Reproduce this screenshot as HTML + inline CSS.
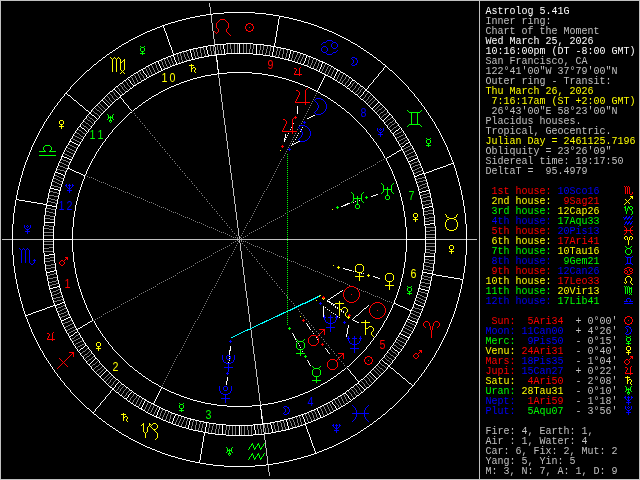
<!DOCTYPE html>
<html><head><meta charset="utf-8"><title>Astrolog 5.41G</title>
<style>
html,body{margin:0;padding:0;background:#000;overflow:hidden}
#c{will-change:transform;position:relative;width:640px;height:480px;background:#000;overflow:hidden}
svg{position:absolute;left:0;top:0}
svg path{fill:none;stroke-width:1;shape-rendering:crispEdges}
svg text{font-family:"Liberation Sans",sans-serif;font-size:12.6px;text-anchor:middle}
pre{position:absolute;left:485.5px;top:7px;margin:0;font-family:"Liberation Mono",monospace;font-size:10px;line-height:10px;color:#c0c0c0;white-space:pre}
.w{color:#fff}.y{color:#ff0}.r{color:#f00}.g{color:#0f0}.b{color:#00f}
</style></head><body><div id="c">
<svg width="640" height="480" viewBox="0 0 640 480"><g transform="translate(0,0.5)">
<path stroke="#ffffff" d="M224 12h31M213 13h11M255 13h11M206 14h7M266 14h7M200 15h6M273 15h6M195 16h5M279 16h5M190 17h5M279 17h1M284 17h5M186 18h4M279 18h1M289 18h4M182 19h4M278 19h1M293 19h4M178 20h4M278 20h1M297 20h4M175 21h3M278 21h1M301 21h3M171 22h4M278 22h1M304 22h4M168 23h3M278 23h1M308 23h3M165 24h3M278 24h1M311 24h3M162 25h3M277 25h1M314 25h3M160 26h2M163 26h1M277 26h1M317 26h2M157 27h3M163 27h1M277 27h1M319 27h3M155 28h2M164 28h1M277 28h1M322 28h2M152 29h3M164 29h1M277 29h1M324 29h3M150 30h2M164 30h1M277 30h1M327 30h2M147 31h3M165 31h1M276 31h1M329 31h3M145 32h2M165 32h1M276 32h1M332 32h2M143 33h2M166 33h1M276 33h1M334 33h2M141 34h2M166 34h1M276 34h1M336 34h2M139 35h2M166 35h1M276 35h1M338 35h2M137 36h2M167 36h1M276 36h1M340 36h2M135 37h2M167 37h1M275 37h1M342 37h2M133 38h2M167 38h1M275 38h1M344 38h2M131 39h2M168 39h1M275 39h1M346 39h2M129 40h2M168 40h1M275 40h1M348 40h2M128 41h1M168 41h1M275 41h1M350 41h1M126 42h2M169 42h1M275 42h1M351 42h2M124 43h2M169 43h1M226 43h27M274 43h1M353 43h2M122 44h2M169 44h1M215 44h11M239 44h1M253 44h11M274 44h1M355 44h2M121 45h1M170 45h1M208 45h7M223 45h1M239 45h1M256 45h1M264 45h7M274 45h1M357 45h1M119 46h2M170 46h1M203 46h5M223 46h1M239 46h1M256 46h1M271 46h5M358 46h2M118 47h1M171 47h1M198 47h5M206 47h1M223 47h1M239 47h1M256 47h1M273 47h1M276 47h5M360 47h1M116 48h2M171 48h1M193 48h5M206 48h1M223 48h1M239 48h1M256 48h1M273 48h1M281 48h5M361 48h2M115 49h1M171 49h1M189 49h4M206 49h1M224 49h1M239 49h1M256 49h1M273 49h1M286 49h4M363 49h1M113 50h2M172 50h1M186 50h3M190 50h1M207 50h1M224 50h1M239 50h1M256 50h1M273 50h1M290 50h3M364 50h2M112 51h1M172 51h1M182 51h4M190 51h1M207 51h1M224 51h1M239 51h1M256 51h1M273 51h1M290 51h1M293 51h4M366 51h1M110 52h2M172 52h1M179 52h3M190 52h1M207 52h1M224 52h1M239 52h1M256 52h1M272 52h1M290 52h1M297 52h3M367 52h2M109 53h1M173 53h1M176 53h3M191 53h1M207 53h1M224 53h1M226 53h27M256 53h1M272 53h1M290 53h1M300 53h3M369 53h1M107 54h2M173 54h3M191 54h1M208 54h1M216 54h10M253 54h10M272 54h1M289 54h1M303 54h3M370 54h2M106 55h1M171 55h3M191 55h1M208 55h9M263 55h7M272 55h1M289 55h1M306 55h2M372 55h1M105 56h1M168 56h3M173 56h1M191 56h1M204 56h5M216 56h1M270 56h5M289 56h1M306 56h1M308 56h3M373 56h1M103 57h2M166 57h2M174 57h1M192 57h1M199 57h5M216 57h1M275 57h5M289 57h1M306 57h1M311 57h2M374 57h2M102 58h1M163 58h3M174 58h1M192 58h1M195 58h4M216 58h1M280 58h4M288 58h1M305 58h1M313 58h3M376 58h1M101 59h1M161 59h2M174 59h1M191 59h4M216 59h1M284 59h5M305 59h1M316 59h2M377 59h1M99 60h2M159 60h2M175 60h1M187 60h4M217 60h1M288 60h4M305 60h1M318 60h2M378 60h2M98 61h1M156 61h3M175 61h1M184 61h3M217 61h1M292 61h3M304 61h1M320 61h3M380 61h1M97 62h1M154 62h2M158 62h1M176 62h1M181 62h3M217 62h1M295 62h3M304 62h1M322 62h3M381 62h1M96 63h1M152 63h2M158 63h1M176 63h1M178 63h3M217 63h1M298 63h3M303 63h1M322 63h1M325 63h2M382 63h1M94 64h2M150 64h2M159 64h1M175 64h3M217 64h1M301 64h3M321 64h1M327 64h2M383 64h2M93 65h1M148 65h2M159 65h1M172 65h3M217 65h1M304 65h3M321 65h1M329 65h2M385 65h1M92 66h1M146 66h2M160 66h1M170 66h2M217 66h1M307 66h2M321 66h1M331 66h2M385 66h2M91 67h1M145 67h1M160 67h1M168 67h2M217 67h1M309 67h2M320 67h1M333 67h1M384 67h1M387 67h1M90 68h1M143 68h2M161 68h1M165 68h3M217 68h1M311 68h3M320 68h1M334 68h2M383 68h1M388 68h1M89 69h1M141 69h2M161 69h1M163 69h2M218 69h1M314 69h2M319 69h1M336 69h2M383 69h1M389 69h1M87 70h2M139 70h2M142 70h1M161 70h2M218 70h1M316 70h2M319 70h1M337 70h3M382 70h1M390 70h2M86 71h1M138 71h1M143 71h1M159 71h2M218 71h1M318 71h2M337 71h1M340 71h1M381 71h1M392 71h1M85 72h1M136 72h2M143 72h1M157 72h2M218 72h1M227 72h25M320 72h2M336 72h1M341 72h2M380 72h1M393 72h1M84 73h1M134 73h2M144 73h1M155 73h2M217 73h10M252 73h10M322 73h2M336 73h1M343 73h2M379 73h1M394 73h1M83 74h1M133 74h1M145 74h1M153 74h2M211 74h6M262 74h6M324 74h2M335 74h1M345 74h1M378 74h1M395 74h1M82 75h1M131 75h2M146 75h1M151 75h2M205 75h6M268 75h6M325 75h3M335 75h1M346 75h2M378 75h1M396 75h1M81 76h1M130 76h1M146 76h1M149 76h2M201 76h4M274 76h4M324 76h1M328 76h2M334 76h1M348 76h1M377 76h1M397 76h1M80 77h1M128 77h2M147 77h2M197 77h4M278 77h4M324 77h1M330 77h2M334 77h1M349 77h2M376 77h1M398 77h1M79 78h1M127 78h1M146 78h1M193 78h4M282 78h4M323 78h1M332 78h2M351 78h1M375 78h1M399 78h1M78 79h1M126 79h1M128 79h1M144 79h2M190 79h3M286 79h3M323 79h1M333 79h2M352 79h1M374 79h1M400 79h1M77 80h1M124 80h2M129 80h1M142 80h2M187 80h3M289 80h3M322 80h1M335 80h2M352 80h3M373 80h1M401 80h1M76 81h1M123 81h1M130 81h1M141 81h1M184 81h3M292 81h3M322 81h1M337 81h1M351 81h1M355 81h1M373 81h1M402 81h1M75 82h1M122 82h1M130 82h1M139 82h2M181 82h3M295 82h3M321 82h1M338 82h2M350 82h1M356 82h1M372 82h1M403 82h1M74 83h1M120 83h2M131 83h1M137 83h2M179 83h2M298 83h2M321 83h1M340 83h2M350 83h1M357 83h2M371 83h1M404 83h1M73 84h1M119 84h1M132 84h1M136 84h1M176 84h3M300 84h3M320 84h1M342 84h1M349 84h1M359 84h1M370 84h1M405 84h1M72 85h1M118 85h1M133 85h3M174 85h2M303 85h2M320 85h1M343 85h2M348 85h1M360 85h1M369 85h1M406 85h1M71 86h1M116 86h2M133 86h1M171 86h3M305 86h3M319 86h1M345 86h1M347 86h1M361 86h2M368 86h1M407 86h1M70 87h1M115 87h1M132 87h1M169 87h2M308 87h2M319 87h1M346 87h1M363 87h1M368 87h1M408 87h1M70 88h1M114 88h1M130 88h2M167 88h2M310 88h2M318 88h1M347 88h2M364 88h1M367 88h1M408 88h1M69 89h1M113 89h2M129 89h1M165 89h2M312 89h2M318 89h1M349 89h1M365 89h2M409 89h1M68 90h1M112 90h1M115 90h1M128 90h1M163 90h2M314 90h2M317 90h1M350 90h1M365 90h2M410 90h1M67 91h1M110 91h2M116 91h1M126 91h2M161 91h2M316 91h2M351 91h2M364 91h1M367 91h2M411 91h1M66 92h1M109 92h1M117 92h1M125 92h1M159 92h2M318 92h2M353 92h1M363 92h1M369 92h1M412 92h1M65 93h2M108 93h1M118 93h1M124 93h1M158 93h1M320 93h1M354 93h1M363 93h1M370 93h1M413 93h1M64 94h1M67 94h1M107 94h1M119 94h1M122 94h2M156 94h2M321 94h2M355 94h2M362 94h1M371 94h1M414 94h1M64 95h1M68 95h2M106 95h1M120 95h2M154 95h2M323 95h2M357 95h1M361 95h1M372 95h1M414 95h1M63 96h1M70 96h1M105 96h1M120 96h1M152 96h2M325 96h2M358 96h1M360 96h1M373 96h1M415 96h1M62 97h1M71 97h1M104 97h1M119 97h2M151 97h1M327 97h1M359 97h1M374 97h1M416 97h1M61 98h1M72 98h1M103 98h1M118 98h1M121 98h1M149 98h2M328 98h2M360 98h1M375 98h1M417 98h1M60 99h1M73 99h1M102 99h1M116 99h2M122 99h1M148 99h1M330 99h1M361 99h2M376 99h1M418 99h1M60 100h1M74 100h2M101 100h2M115 100h1M123 100h1M146 100h2M331 100h2M363 100h1M377 100h1M418 100h1M59 101h1M76 101h1M100 101h1M103 101h1M114 101h1M123 101h1M145 101h1M333 101h1M364 101h1M378 101h1M419 101h1M58 102h1M77 102h1M99 102h1M104 102h1M113 102h1M124 102h1M143 102h2M334 102h2M365 102h1M378 102h2M420 102h1M57 103h1M78 103h1M98 103h1M105 103h1M112 103h1M125 103h1M142 103h1M336 103h1M366 103h1M377 103h1M380 103h1M421 103h1M57 104h1M79 104h1M97 104h1M106 104h1M111 104h1M126 104h1M141 104h1M337 104h1M367 104h1M376 104h1M381 104h1M421 104h1M56 105h1M80 105h2M96 105h1M107 105h1M110 105h1M127 105h1M139 105h2M338 105h2M368 105h1M375 105h1M382 105h1M422 105h1M55 106h1M82 106h1M95 106h1M108 106h2M128 106h1M138 106h1M297 106h1M340 106h1M369 106h1M374 106h1M383 106h1M423 106h1M54 107h1M83 107h1M94 107h1M108 107h1M128 107h1M137 107h1M297 107h1M341 107h1M370 107h1M373 107h1M384 107h1M424 107h1M54 108h1M84 108h1M93 108h1M107 108h1M129 108h1M135 108h2M297 108h1M342 108h2M371 108h2M385 108h1M424 108h1M53 109h1M85 109h1M92 109h1M106 109h1M130 109h1M134 109h1M297 109h1M344 109h1M372 109h1M386 109h1M425 109h1M52 110h1M86 110h2M91 110h1M105 110h1M131 110h1M133 110h1M297 110h1M345 110h1M373 110h1M387 110h1M426 110h1M52 111h1M88 111h1M91 111h1M104 111h1M297 111h1M346 111h1M374 111h1M387 111h1M426 111h1M51 112h1M89 112h2M103 112h1M130 112h2M297 112h1M347 112h2M375 112h1M388 112h1M427 112h1M50 113h1M89 113h2M102 113h1M129 113h1M297 113h1M349 113h1M376 113h1M389 113h1M428 113h1M50 114h1M88 114h1M91 114h1M101 114h1M128 114h1M350 114h1M377 114h1M389 114h2M428 114h1M49 115h1M87 115h1M92 115h2M100 115h1M127 115h1M313 115h2M351 115h1M378 115h1M388 115h1M391 115h1M429 115h1M48 116h1M86 116h1M94 116h1M99 116h1M126 116h1M311 116h2M352 116h1M379 116h1M387 116h1M392 116h1M430 116h1M48 117h1M86 117h1M95 117h1M99 117h1M125 117h1M309 117h2M353 117h1M379 117h1M386 117h1M392 117h1M430 117h1M47 118h1M85 118h1M96 118h1M98 118h1M124 118h1M307 118h2M354 118h1M380 118h1M385 118h1M393 118h1M431 118h1M46 119h1M84 119h1M97 119h1M123 119h1M355 119h1M381 119h1M384 119h1M394 119h1M432 119h1M46 120h1M83 120h1M96 120h1M122 120h1M356 120h1M382 120h2M395 120h1M432 120h1M45 121h1M83 121h1M95 121h1M121 121h1M357 121h1M383 121h1M395 121h1M433 121h1M44 122h1M82 122h1M94 122h1M120 122h1M358 122h1M384 122h1M396 122h1M434 122h1M44 123h1M81 123h1M94 123h1M119 123h1M293 123h1M359 123h1M384 123h1M397 123h1M434 123h1M43 124h1M80 124h1M93 124h1M118 124h1M360 124h1M385 124h1M398 124h1M435 124h1M43 125h1M80 125h1M92 125h1M117 125h1M361 125h1M386 125h1M398 125h1M435 125h1M42 126h1M79 126h2M91 126h1M116 126h1M362 126h1M387 126h1M399 126h1M436 126h1M42 127h1M78 127h1M81 127h1M91 127h1M115 127h1M291 127h1M302 127h1M363 127h1M387 127h1M400 127h1M436 127h1M41 128h1M77 128h1M82 128h2M90 128h1M114 128h1M364 128h1M388 128h1M399 128h1M401 128h1M437 128h1M40 129h1M77 129h1M84 129h1M89 129h1M113 129h1M290 129h1M301 129h1M365 129h1M389 129h1M398 129h1M401 129h1M438 129h1M40 130h1M76 130h1M85 130h1M88 130h1M112 130h1M366 130h1M390 130h1M396 130h2M402 130h1M438 130h1M39 131h1M75 131h1M86 131h1M88 131h1M112 131h1M300 131h1M366 131h1M390 131h1M395 131h1M403 131h1M439 131h1M39 132h1M75 132h1M87 132h1M111 132h1M367 132h1M391 132h1M394 132h1M403 132h1M439 132h1M38 133h1M74 133h1M86 133h1M110 133h1M288 133h1M298 133h1M368 133h1M392 133h2M404 133h1M440 133h1M38 134h1M73 134h1M85 134h1M109 134h1M285 134h1M369 134h1M393 134h1M405 134h1M440 134h1M37 135h1M73 135h1M85 135h1M108 135h1M285 135h1M287 135h1M297 135h1M370 135h1M393 135h1M405 135h1M441 135h1M37 136h1M72 136h1M84 136h1M108 136h1M285 136h1M370 136h1M394 136h1M406 136h1M441 136h1M36 137h1M72 137h1M83 137h1M107 137h1M285 137h2M296 137h1M371 137h1M395 137h1M406 137h1M442 137h1M36 138h1M71 138h1M83 138h1M106 138h1M284 138h1M372 138h1M395 138h1M407 138h1M442 138h1M35 139h1M70 139h1M82 139h1M105 139h1M284 139h2M295 139h1M373 139h1M396 139h1M408 139h1M443 139h1M35 140h1M70 140h1M82 140h1M105 140h1M284 140h1M373 140h1M396 140h1M408 140h1M443 140h1M34 141h1M69 141h3M81 141h1M104 141h1M284 141h1M293 141h1M298 141h2M374 141h1M397 141h1M409 141h1M444 141h1M34 142h1M69 142h1M72 142h2M80 142h1M103 142h1M296 142h2M375 142h1M398 142h1M408 142h2M444 142h1M33 143h1M68 143h1M74 143h2M80 143h1M102 143h1M292 143h1M294 143h2M376 143h1M398 143h1M406 143h2M410 143h1M445 143h1M33 144h1M68 144h1M76 144h2M79 144h1M102 144h1M292 144h2M376 144h1M399 144h1M405 144h1M410 144h1M445 144h1M32 145h1M67 145h1M78 145h2M101 145h1M291 145h1M377 145h1M399 145h1M404 145h1M411 145h1M446 145h1M32 146h1M66 146h1M78 146h1M100 146h1M378 146h1M400 146h1M402 146h2M412 146h1M446 146h1M31 147h1M66 147h1M77 147h1M100 147h1M378 147h1M401 147h1M412 147h1M447 147h1M31 148h1M65 148h1M77 148h1M99 148h1M379 148h1M401 148h1M413 148h1M447 148h1M31 149h1M65 149h1M76 149h1M98 149h1M380 149h1M401 149h2M413 149h1M447 149h1M30 150h1M64 150h1M76 150h1M98 150h1M380 150h1M399 150h2M402 150h1M414 150h1M448 150h1M30 151h1M64 151h1M75 151h1M97 151h1M381 151h1M397 151h2M403 151h1M414 151h1M448 151h1M29 152h1M63 152h1M75 152h1M96 152h1M382 152h1M396 152h1M403 152h1M415 152h1M449 152h1M29 153h1M63 153h1M74 153h1M96 153h1M382 153h1M394 153h2M404 153h1M415 153h1M449 153h1M29 154h1M62 154h1M74 154h1M95 154h1M383 154h1M392 154h2M404 154h1M416 154h1M449 154h1M28 155h1M62 155h1M73 155h1M95 155h1M383 155h1M391 155h1M405 155h1M416 155h1M450 155h1M28 156h1M61 156h3M73 156h1M94 156h1M384 156h1M389 156h2M405 156h1M417 156h1M450 156h1M27 157h1M61 157h1M64 157h3M72 157h1M94 157h1M384 157h1M387 157h2M406 157h1M417 157h1M451 157h1M27 158h1M61 158h1M67 158h2M72 158h1M93 158h1M386 158h1M406 158h1M415 158h3M451 158h1M27 159h1M60 159h1M69 159h3M92 159h1M386 159h1M407 159h1M413 159h2M418 159h1M451 159h1M26 160h1M60 160h1M71 160h1M92 160h1M386 160h1M407 160h1M411 160h2M418 160h1M452 160h1M26 161h1M59 161h1M70 161h1M91 161h1M387 161h1M408 161h3M419 161h1M452 161h1M25 162h1M59 162h1M70 162h1M91 162h1M387 162h1M408 162h1M419 162h1M453 162h1M25 163h1M58 163h1M69 163h1M90 163h1M388 163h1M409 163h1M420 163h1M451 163h3M25 164h1M58 164h1M69 164h1M90 164h1M388 164h1M409 164h1M420 164h1M448 164h3M453 164h1M24 165h1M58 165h1M68 165h1M89 165h1M389 165h1M410 165h1M420 165h1M446 165h2M454 165h1M24 166h1M57 166h1M68 166h1M89 166h1M389 166h1M410 166h1M421 166h1M443 166h3M454 166h1M24 167h1M57 167h1M68 167h1M88 167h1M390 167h1M410 167h1M421 167h1M440 167h3M454 167h1M23 168h1M56 168h1M67 168h3M88 168h1M390 168h1M411 168h1M422 168h1M437 168h3M455 168h1M23 169h1M56 169h1M67 169h1M70 169h2M87 169h1M391 169h1M411 169h1M422 169h1M434 169h3M455 169h1M23 170h1M56 170h1M66 170h1M72 170h2M87 170h1M391 170h1M412 170h1M422 170h1M432 170h2M455 170h1M22 171h1M55 171h1M66 171h1M74 171h2M86 171h1M392 171h1M412 171h1M423 171h1M429 171h3M456 171h1M22 172h1M55 172h3M65 172h1M76 172h3M86 172h1M392 172h1M413 172h1M423 172h1M426 172h3M456 172h1M22 173h1M54 173h1M58 173h3M65 173h1M79 173h2M86 173h1M392 173h1M413 173h1M422 173h4M456 173h1M22 174h1M54 174h1M61 174h2M65 174h1M81 174h2M85 174h1M393 174h1M413 174h1M419 174h3M424 174h1M456 174h1M21 175h1M54 175h1M63 175h2M83 175h2M393 175h1M414 175h1M417 175h2M424 175h1M457 175h1M21 176h1M53 176h1M64 176h1M84 176h1M394 176h1M414 176h3M425 176h1M457 176h1M21 177h1M53 177h1M64 177h1M84 177h1M394 177h1M414 177h1M425 177h1M457 177h1M20 178h1M53 178h1M63 178h1M84 178h1M394 178h1M415 178h1M425 178h1M458 178h1M20 179h1M52 179h1M63 179h1M83 179h1M395 179h1M415 179h1M426 179h1M458 179h1M20 180h1M52 180h1M63 180h1M83 180h1M395 180h1M415 180h1M426 180h1M458 180h1M20 181h1M52 181h1M62 181h1M82 181h1M396 181h1M416 181h1M426 181h1M458 181h1M19 182h1M51 182h1M62 182h1M82 182h1M396 182h1M416 182h1M427 182h1M459 182h1M19 183h1M51 183h1M62 183h1M82 183h1M396 183h1M416 183h1M427 183h1M459 183h1M19 184h1M51 184h1M61 184h1M81 184h1M397 184h1M417 184h1M427 184h1M459 184h1M19 185h1M51 185h1M61 185h1M81 185h1M397 185h1M417 185h1M427 185h1M459 185h1M18 186h1M50 186h1M61 186h1M81 186h1M397 186h1M417 186h1M428 186h1M460 186h1M18 187h1M50 187h1M60 187h1M80 187h1M398 187h1M418 187h1M428 187h1M460 187h1M18 188h1M50 188h4M60 188h1M80 188h1M398 188h1M418 188h1M428 188h1M460 188h1M18 189h1M49 189h1M54 189h4M60 189h1M80 189h1M398 189h1M418 189h1M429 189h1M460 189h1M17 190h1M49 190h1M58 190h3M79 190h1M399 190h1M418 190h1M426 190h4M461 190h1M17 191h1M49 191h1M59 191h1M79 191h1M399 191h1M419 191h1M422 191h4M429 191h1M461 191h1M17 192h1M49 192h1M59 192h1M79 192h1M399 192h1M419 192h3M429 192h1M461 192h1M17 193h1M48 193h1M59 193h1M78 193h1M400 193h1M419 193h1M430 193h1M461 193h1M17 194h1M48 194h1M59 194h1M78 194h1M376 194h2M400 194h1M419 194h1M430 194h1M461 194h1M16 195h1M48 195h1M58 195h1M78 195h1M373 195h3M400 195h1M420 195h1M430 195h1M462 195h1M16 196h1M48 196h1M58 196h1M78 196h1M371 196h2M400 196h1M420 196h1M430 196h1M462 196h1M16 197h1M48 197h1M58 197h1M77 197h1M401 197h1M420 197h1M430 197h1M462 197h1M16 198h1M47 198h1M58 198h1M77 198h1M401 198h1M420 198h1M431 198h1M462 198h1M16 199h3M47 199h1M57 199h1M77 199h1M401 199h1M421 199h1M431 199h1M462 199h1M15 200h1M19 200h6M47 200h1M57 200h1M77 200h1M359 200h1M401 200h1M421 200h1M431 200h1M463 200h1M15 201h1M25 201h6M47 201h1M57 201h1M76 201h1M355 201h1M402 201h1M421 201h1M431 201h1M463 201h1M15 202h1M31 202h6M47 202h1M57 202h1M76 202h1M353 202h1M402 202h1M421 202h1M431 202h1M463 202h1M15 203h1M37 203h6M46 203h1M57 203h1M76 203h1M347 203h3M402 203h1M421 203h1M432 203h1M463 203h1M15 204h1M43 204h4M56 204h1M76 204h1M345 204h3M402 204h1M422 204h1M432 204h1M463 204h1M15 205h1M46 205h6M56 205h1M75 205h1M343 205h3M403 205h1M422 205h1M432 205h1M463 205h1M14 206h1M46 206h1M52 206h5M75 206h1M341 206h2M403 206h1M422 206h1M429 206h4M464 206h1M14 207h1M46 207h1M56 207h1M75 207h1M403 207h1M422 207h1M425 207h4M432 207h1M464 207h1M14 208h1M45 208h1M56 208h1M75 208h1M403 208h1M422 208h3M433 208h1M464 208h1M14 209h1M45 209h1M55 209h1M75 209h1M403 209h1M423 209h1M433 209h1M464 209h1M14 210h1M45 210h1M55 210h1M75 210h1M403 210h1M423 210h1M433 210h1M464 210h1M14 211h1M45 211h1M55 211h1M74 211h1M404 211h1M423 211h1M433 211h1M464 211h1M14 212h1M45 212h1M55 212h1M74 212h1M404 212h1M423 212h1M433 212h1M464 212h1M13 213h1M45 213h1M55 213h1M74 213h1M404 213h1M423 213h1M433 213h1M465 213h1M13 214h1M45 214h1M55 214h1M74 214h1M404 214h1M423 214h1M433 214h1M465 214h1M13 215h1M44 215h1M55 215h1M74 215h1M404 215h1M423 215h1M434 215h1M465 215h1M13 216h1M44 216h1M54 216h1M74 216h1M404 216h1M424 216h1M434 216h1M465 216h1M13 217h1M44 217h1M54 217h1M73 217h1M405 217h1M424 217h1M434 217h1M465 217h1M13 218h1M44 218h1M54 218h1M73 218h1M405 218h1M424 218h1M434 218h1M465 218h1M13 219h1M44 219h1M54 219h1M73 219h1M405 219h1M424 219h1M434 219h1M465 219h1M13 220h1M44 220h1M54 220h1M73 220h1M405 220h1M424 220h1M434 220h1M465 220h1M13 221h1M44 221h1M54 221h1M73 221h1M405 221h1M424 221h1M434 221h1M465 221h1M13 222h1M44 222h11M73 222h1M405 222h1M424 222h1M434 222h1M465 222h1M13 223h1M44 223h1M54 223h1M73 223h1M405 223h1M424 223h1M430 223h5M465 223h1M12 224h1M44 224h1M54 224h1M73 224h1M405 224h1M424 224h6M434 224h1M466 224h1M12 225h1M44 225h1M54 225h1M73 225h1M405 225h1M424 225h1M434 225h1M466 225h1M12 226h1M43 226h1M53 226h1M73 226h1M405 226h1M425 226h1M435 226h1M466 226h1M12 227h1M43 227h1M53 227h1M72 227h1M406 227h1M425 227h1M435 227h1M466 227h1M12 228h1M43 228h1M53 228h1M72 228h1M406 228h1M425 228h1M435 228h1M466 228h1M12 229h1M43 229h1M53 229h1M72 229h1M406 229h1M425 229h1M435 229h1M466 229h1M12 230h1M43 230h1M53 230h1M72 230h1M406 230h1M425 230h1M435 230h1M466 230h1M12 231h1M43 231h1M53 231h1M72 231h1M406 231h1M425 231h1M435 231h1M466 231h1M12 232h1M43 232h1M53 232h1M72 232h1M406 232h1M425 232h1M435 232h1M466 232h1M12 233h1M43 233h1M53 233h1M72 233h1M406 233h1M425 233h1M435 233h1M466 233h1M12 234h1M43 234h1M53 234h1M72 234h1M406 234h1M425 234h1M435 234h1M466 234h1M12 235h1M43 235h1M53 235h1M72 235h1M406 235h1M425 235h1M435 235h1M466 235h1M12 236h1M43 236h1M53 236h1M72 236h1M406 236h1M425 236h1M435 236h1M466 236h1M12 237h1M43 237h1M53 237h1M72 237h1M406 237h1M425 237h1M435 237h1M466 237h1M12 238h1M43 238h1M53 238h1M72 238h1M406 238h1M425 238h1M435 238h1M466 238h1M12 239h1M43 239h30M406 239h30M466 239h1M12 240h1M43 240h1M53 240h1M72 240h1M406 240h1M425 240h1M435 240h1M466 240h1M12 241h1M43 241h1M53 241h1M72 241h1M406 241h1M425 241h1M435 241h1M466 241h1M12 242h1M43 242h1M53 242h1M72 242h1M406 242h1M425 242h1M435 242h1M466 242h1M12 243h1M43 243h1M53 243h1M72 243h1M406 243h1M425 243h1M435 243h1M466 243h1M12 244h1M43 244h1M53 244h1M72 244h1M406 244h1M425 244h1M435 244h1M466 244h1M12 245h1M43 245h1M53 245h1M72 245h1M406 245h1M425 245h1M435 245h1M466 245h1M12 246h1M43 246h1M53 246h1M72 246h1M406 246h1M425 246h1M435 246h1M466 246h1M12 247h1M43 247h1M53 247h1M72 247h1M406 247h1M425 247h1M435 247h1M466 247h1M12 248h1M43 248h1M53 248h1M72 248h1M406 248h1M425 248h1M435 248h1M466 248h1M12 249h1M43 249h1M53 249h1M72 249h1M406 249h1M425 249h1M435 249h1M466 249h1M12 250h1M43 250h1M53 250h1M72 250h1M406 250h1M425 250h1M435 250h1M466 250h1M12 251h1M43 251h1M53 251h1M72 251h1M406 251h1M425 251h1M435 251h1M466 251h1M12 252h1M43 252h1M53 252h1M73 252h1M405 252h1M425 252h1M435 252h1M466 252h1M12 253h1M44 253h1M54 253h1M73 253h1M405 253h1M424 253h1M434 253h1M466 253h1M12 254h1M44 254h1M49 254h6M73 254h1M405 254h1M424 254h1M434 254h1M466 254h1M13 255h1M44 255h5M54 255h1M73 255h1M405 255h1M424 255h1M434 255h1M465 255h1M13 256h1M44 256h1M54 256h1M73 256h1M405 256h1M424 256h11M465 256h1M13 257h1M44 257h1M54 257h1M73 257h1M405 257h1M424 257h1M434 257h1M465 257h1M13 258h1M44 258h1M54 258h1M73 258h1M405 258h1M424 258h1M434 258h1M465 258h1M13 259h1M44 259h1M54 259h1M73 259h1M405 259h1M424 259h1M434 259h1M465 259h1M13 260h1M44 260h1M54 260h1M73 260h1M405 260h1M424 260h1M434 260h1M465 260h1M13 261h1M44 261h1M54 261h1M73 261h1M405 261h1M424 261h1M434 261h1M465 261h1M13 262h1M44 262h1M54 262h1M74 262h1M404 262h1M424 262h1M434 262h1M465 262h1M13 263h1M44 263h1M55 263h1M74 263h1M404 263h1M423 263h1M434 263h1M465 263h1M13 264h1M45 264h1M55 264h1M74 264h1M404 264h1M423 264h1M433 264h1M465 264h1M13 265h1M45 265h1M55 265h1M74 265h1M404 265h1M423 265h1M433 265h1M465 265h1M14 266h1M45 266h1M55 266h1M74 266h1M404 266h1M423 266h1M433 266h1M464 266h1M14 267h1M45 267h1M55 267h1M74 267h1M404 267h1M423 267h1M433 267h1M464 267h1M14 268h1M45 268h1M55 268h1M75 268h1M343 268h2M403 268h1M423 268h1M433 268h1M464 268h1M14 269h1M45 269h1M55 269h1M75 269h1M345 269h4M403 269h1M423 269h1M433 269h1M464 269h1M14 270h1M45 270h1M54 270h3M75 270h1M349 270h3M403 270h1M422 270h1M433 270h1M464 270h1M14 271h1M46 271h1M50 271h4M56 271h1M75 271h1M353 271h1M355 271h1M403 271h1M422 271h1M432 271h1M464 271h1M14 272h1M46 272h4M56 272h1M75 272h1M403 272h1M422 272h5M432 272h1M464 272h1M15 273h1M46 273h1M56 273h1M75 273h1M361 273h1M363 273h1M403 273h1M422 273h1M427 273h6M463 273h1M15 274h1M46 274h1M56 274h1M76 274h1M402 274h1M422 274h1M432 274h4M463 274h1M15 275h1M46 275h1M57 275h1M76 275h1M402 275h1M421 275h1M432 275h1M436 275h6M463 275h1M15 276h1M47 276h1M57 276h1M76 276h1M373 276h2M402 276h1M421 276h1M431 276h1M442 276h6M463 276h1M15 277h1M47 277h1M57 277h1M76 277h1M375 277h3M402 277h1M421 277h1M431 277h1M448 277h6M463 277h1M15 278h1M47 278h1M57 278h1M77 278h1M378 278h2M401 278h1M421 278h1M431 278h1M454 278h6M463 278h1M16 279h1M47 279h1M57 279h1M77 279h1M401 279h1M421 279h1M431 279h1M460 279h3M16 280h1M47 280h1M58 280h1M77 280h1M401 280h1M420 280h1M431 280h1M462 280h1M16 281h1M48 281h1M58 281h1M77 281h1M401 281h1M420 281h1M430 281h1M462 281h1M16 282h1M48 282h1M58 282h1M78 282h1M400 282h1M420 282h1M430 282h1M462 282h1M16 283h1M48 283h1M58 283h1M78 283h1M400 283h1M420 283h1M430 283h1M462 283h1M17 284h1M48 284h1M59 284h1M78 284h1M400 284h1M419 284h1M430 284h1M461 284h1M17 285h1M48 285h1M59 285h1M78 285h1M400 285h1M419 285h1M430 285h1M461 285h1M17 286h1M49 286h1M57 286h3M79 286h1M399 286h1M419 286h1M429 286h1M461 286h1M17 287h1M49 287h1M53 287h4M59 287h1M79 287h1M399 287h1M419 287h1M429 287h1M461 287h1M17 288h1M49 288h4M60 288h1M79 288h1M399 288h1M418 288h3M429 288h1M461 288h1M18 289h1M49 289h1M60 289h1M80 289h1M398 289h1M418 289h1M421 289h4M429 289h1M460 289h1M18 290h1M50 290h1M60 290h1M80 290h1M342 290h1M398 290h1M418 290h1M425 290h4M460 290h1M18 291h1M50 291h1M60 291h1M80 291h1M340 291h2M398 291h1M418 291h1M428 291h1M460 291h1M18 292h1M50 292h1M61 292h1M81 292h1M339 292h1M397 292h1M417 292h1M428 292h1M460 292h1M19 293h1M51 293h1M61 293h1M81 293h1M337 293h2M397 293h1M417 293h1M427 293h1M459 293h1M19 294h1M51 294h1M61 294h1M81 294h1M336 294h1M397 294h1M417 294h1M427 294h1M459 294h1M19 295h1M51 295h1M62 295h1M82 295h1M334 295h2M396 295h1M416 295h1M427 295h1M459 295h1M19 296h1M51 296h1M62 296h1M82 296h1M333 296h1M396 296h1M416 296h1M427 296h1M459 296h1M20 297h1M52 297h1M62 297h1M82 297h1M331 297h2M396 297h1M416 297h1M426 297h1M458 297h1M20 298h1M52 298h1M63 298h1M83 298h1M330 298h1M395 298h1M415 298h1M426 298h1M458 298h1M20 299h1M52 299h1M63 299h1M83 299h1M328 299h2M395 299h1M415 299h1M426 299h1M458 299h1M20 300h1M53 300h1M63 300h1M84 300h1M327 300h1M394 300h1M415 300h1M425 300h1M458 300h1M21 301h1M53 301h1M64 301h1M84 301h1M327 301h3M394 301h1M414 301h1M425 301h1M457 301h1M21 302h1M53 302h1M62 302h3M84 302h1M329 302h2M394 302h1M414 302h1M425 302h1M457 302h1M21 303h1M54 303h1M60 303h2M64 303h1M85 303h1M331 303h2M394 303h2M414 303h2M424 303h1M457 303h1M22 304h1M54 304h1M57 304h3M65 304h1M85 304h1M331 304h1M333 304h2M393 304h1M396 304h2M413 304h1M416 304h2M424 304h1M456 304h1M22 305h1M53 305h4M65 305h1M86 305h1M333 305h1M368 305h1M392 305h1M398 305h2M413 305h1M418 305h3M424 305h1M456 305h1M22 306h1M50 306h3M55 306h1M65 306h1M86 306h1M323 306h1M335 306h1M367 306h1M392 306h1M400 306h3M413 306h1M421 306h3M456 306h1M22 307h1M47 307h3M55 307h1M66 307h1M86 307h1M323 307h1M325 307h1M335 307h1M337 307h1M366 307h1M392 307h1M403 307h2M412 307h1M423 307h1M456 307h1M23 308h1M45 308h2M56 308h1M66 308h1M87 308h1M323 308h1M337 308h1M364 308h2M391 308h1M405 308h2M412 308h1M422 308h1M455 308h1M23 309h1M42 309h3M56 309h1M67 309h1M87 309h1M323 309h1M327 309h1M363 309h1M391 309h1M407 309h2M411 309h1M422 309h1M455 309h1M23 310h1M39 310h3M56 310h1M67 310h1M88 310h1M323 310h1M329 310h1M341 310h1M362 310h1M390 310h1M409 310h3M422 310h1M455 310h1M24 311h1M36 311h3M57 311h1M68 311h1M88 311h1M323 311h1M341 311h1M343 311h1M361 311h1M390 311h1M410 311h1M421 311h1M454 311h1M24 312h1M33 312h3M57 312h1M68 312h1M89 312h1M323 312h1M331 312h1M343 312h1M360 312h1M389 312h1M410 312h1M421 312h1M454 312h1M24 313h1M31 313h2M58 313h1M68 313h1M89 313h1M323 313h1M333 313h1M359 313h1M389 313h1M410 313h1M420 313h1M454 313h1M25 314h1M28 314h3M58 314h1M69 314h1M90 314h1M323 314h1M335 314h1M358 314h1M388 314h1M409 314h1M420 314h1M453 314h1M25 315h3M58 315h1M69 315h1M90 315h1M323 315h1M356 315h2M388 315h1M409 315h1M420 315h1M453 315h1M25 316h1M59 316h1M70 316h1M91 316h1M323 316h1M337 316h1M355 316h1M387 316h1M408 316h1M419 316h1M453 316h1M26 317h1M59 317h1M68 317h3M91 317h1M339 317h1M354 317h1M387 317h1M408 317h1M419 317h1M452 317h1M26 318h1M60 318h1M66 318h2M71 318h1M92 318h1M353 318h1M386 318h1M407 318h1M418 318h1M452 318h1M27 319h1M60 319h1M64 319h2M71 319h1M92 319h1M352 319h1M386 319h1M407 319h3M418 319h1M451 319h1M27 320h1M61 320h3M72 320h1M92 320h1M353 320h2M385 320h1M406 320h1M410 320h2M417 320h1M451 320h1M27 321h1M61 321h1M72 321h1M90 321h2M94 321h1M355 321h2M384 321h1M406 321h1M412 321h3M417 321h1M451 321h1M28 322h1M61 322h1M73 322h1M88 322h2M94 322h1M357 322h2M384 322h1M405 322h1M415 322h3M450 322h1M28 323h1M62 323h1M73 323h1M87 323h1M95 323h1M306 323h1M383 323h1M405 323h1M416 323h1M450 323h1M29 324h1M62 324h1M74 324h1M85 324h2M95 324h1M307 324h1M383 324h1M404 324h1M416 324h1M449 324h1M29 325h1M63 325h1M74 325h1M83 325h2M96 325h1M307 325h1M348 325h1M382 325h1M404 325h1M415 325h1M449 325h1M29 326h1M63 326h1M75 326h1M82 326h1M96 326h1M308 326h1M348 326h1M382 326h1M403 326h1M415 326h1M449 326h1M30 327h1M64 327h1M75 327h1M80 327h2M97 327h1M309 327h1M348 327h1M381 327h1M403 327h1M414 327h1M448 327h1M30 328h1M64 328h1M76 328h1M78 328h2M98 328h1M309 328h1M347 328h1M380 328h1M402 328h1M414 328h1M448 328h1M31 329h1M65 329h1M76 329h2M98 329h1M310 329h1M347 329h1M380 329h1M402 329h1M413 329h1M447 329h1M31 330h1M65 330h1M77 330h1M99 330h1M347 330h1M379 330h1M401 330h1M413 330h1M447 330h1M31 331h1M66 331h1M77 331h1M100 331h1M312 331h1M347 331h1M378 331h1M401 331h1M412 331h1M447 331h1M32 332h1M66 332h1M75 332h2M78 332h1M100 332h1M347 332h1M378 332h1M400 332h1M412 332h1M446 332h1M32 333h1M67 333h1M74 333h1M79 333h1M101 333h1M292 333h1M313 333h1M347 333h1M377 333h1M399 333h2M411 333h1M446 333h1M33 334h1M68 334h1M73 334h1M79 334h1M102 334h1M293 334h1M346 334h1M376 334h1M399 334h1M401 334h2M410 334h1M445 334h1M33 335h1M68 335h1M71 335h2M80 335h1M102 335h1M293 335h1M346 335h1M376 335h1M398 335h1M403 335h2M410 335h1M445 335h1M34 336h1M69 336h2M80 336h1M103 336h1M294 336h1M346 336h1M375 336h1M398 336h1M405 336h2M409 336h1M444 336h1M34 337h1M69 337h1M81 337h1M104 337h1M294 337h1M316 337h1M374 337h1M397 337h1M407 337h3M444 337h1M35 338h1M70 338h1M82 338h1M105 338h1M295 338h1M373 338h1M396 338h1M408 338h1M443 338h1M35 339h1M70 339h1M82 339h1M105 339h1M295 339h1M317 339h1M373 339h1M396 339h1M408 339h1M443 339h1M36 340h1M71 340h1M83 340h1M106 340h1M372 340h1M395 340h1M407 340h1M442 340h1M36 341h1M72 341h1M83 341h1M107 341h1M296 341h1M371 341h1M395 341h1M406 341h1M442 341h1M37 342h1M72 342h1M84 342h1M108 342h1M370 342h1M394 342h1M406 342h1M441 342h1M37 343h1M73 343h1M85 343h1M108 343h1M298 343h1M370 343h1M393 343h1M405 343h1M441 343h1M38 344h1M73 344h1M85 344h1M109 344h1M369 344h1M393 344h1M405 344h1M440 344h1M38 345h1M74 345h1M85 345h2M110 345h1M299 345h1M368 345h1M392 345h1M404 345h1M440 345h1M39 346h1M75 346h1M84 346h1M87 346h1M111 346h1M230 346h1M367 346h1M391 346h1M403 346h1M439 346h1M39 347h1M75 347h1M83 347h1M88 347h1M112 347h1M230 347h1M300 347h1M366 347h1M390 347h1M392 347h1M403 347h1M439 347h1M40 348h1M76 348h1M81 348h2M88 348h1M112 348h1M230 348h1M325 348h1M366 348h1M390 348h1M393 348h1M402 348h1M438 348h1M40 349h1M77 349h1M80 349h1M89 349h1M113 349h1M230 349h1M326 349h1M365 349h1M389 349h1M394 349h1M401 349h1M438 349h1M41 350h1M77 350h1M79 350h1M90 350h1M114 350h1M229 350h2M327 350h1M364 350h1M388 350h1M395 350h2M401 350h1M437 350h1M42 351h1M78 351h1M91 351h1M115 351h1M229 351h1M302 351h1M327 351h1M363 351h1M387 351h1M397 351h1M400 351h1M436 351h1M42 352h1M79 352h1M91 352h1M116 352h1M229 352h1M328 352h1M362 352h1M387 352h1M398 352h2M436 352h1M43 353h1M80 353h1M92 353h1M117 353h1M229 353h1M329 353h1M361 353h1M386 353h1M398 353h1M435 353h1M43 354h1M80 354h1M93 354h1M118 354h1M229 354h1M360 354h1M385 354h1M398 354h1M435 354h1M44 355h1M81 355h1M94 355h1M119 355h1M359 355h1M384 355h1M397 355h1M434 355h1M44 356h1M82 356h1M94 356h1M120 356h1M229 356h1M358 356h1M384 356h1M396 356h1M434 356h1M45 357h1M83 357h1M95 357h1M121 357h1M357 357h1M383 357h1M395 357h1M433 357h1M46 358h1M83 358h1M95 358h2M122 358h1M229 358h1M356 358h1M382 358h1M395 358h1M432 358h1M46 359h1M84 359h1M94 359h1M97 359h1M123 359h1M355 359h1M381 359h1M394 359h1M432 359h1M47 360h1M85 360h1M93 360h1M98 360h1M124 360h1M229 360h1M307 360h1M354 360h1M380 360h1M382 360h1M393 360h1M431 360h1M48 361h1M86 361h1M92 361h1M99 361h1M125 361h1M308 361h1M353 361h1M379 361h1M383 361h1M392 361h1M430 361h1M48 362h1M86 362h1M91 362h1M99 362h1M126 362h1M228 362h1M308 362h1M352 362h1M379 362h1M384 362h1M392 362h1M430 362h1M49 363h1M87 363h1M90 363h1M100 363h1M127 363h1M309 363h1M351 363h1M378 363h1M385 363h2M391 363h1M429 363h1M50 364h1M88 364h2M101 364h1M128 364h1M309 364h1M350 364h1M377 364h1M387 364h1M390 364h1M428 364h1M50 365h1M89 365h1M102 365h1M129 365h1M310 365h1M349 365h1M376 365h1M388 365h2M428 365h1M51 366h1M90 366h1M103 366h1M130 366h2M347 366h2M375 366h1M388 366h2M427 366h1M52 367h1M91 367h1M104 367h1M132 367h1M374 367h1M387 367h1M390 367h1M426 367h1M52 368h1M91 368h1M105 368h1M133 368h1M345 368h1M347 368h1M373 368h1M387 368h1M391 368h2M426 368h1M53 369h1M92 369h1M106 369h1M134 369h1M344 369h1M348 369h1M372 369h1M386 369h1M393 369h1M425 369h1M54 370h1M93 370h1M106 370h2M135 370h2M342 370h2M349 370h1M371 370h1M385 370h1M394 370h1M424 370h1M54 371h1M94 371h1M105 371h1M108 371h1M137 371h1M341 371h1M350 371h1M370 371h1M384 371h1M395 371h1M424 371h1M55 372h1M95 372h1M104 372h1M109 372h1M138 372h1M340 372h1M350 372h1M369 372h2M383 372h1M396 372h1M423 372h1M56 373h1M96 373h1M103 373h1M110 373h1M139 373h2M338 373h2M351 373h1M368 373h1M371 373h1M382 373h1M397 373h2M422 373h1M57 374h1M97 374h1M102 374h1M111 374h1M141 374h1M337 374h1M352 374h1M367 374h1M372 374h1M381 374h1M399 374h1M421 374h1M57 375h1M98 375h1M101 375h1M112 375h1M142 375h1M336 375h1M353 375h1M366 375h1M373 375h1M380 375h1M400 375h1M421 375h1M58 376h1M99 376h2M113 376h1M143 376h2M334 376h2M354 376h1M365 376h1M374 376h1M379 376h1M401 376h1M420 376h1M59 377h1M100 377h1M114 377h1M145 377h1M227 377h1M333 377h1M355 377h1M364 377h1M375 377h1M378 377h1M402 377h1M419 377h1M60 378h1M101 378h1M115 378h1M146 378h2M227 378h1M331 378h2M355 378h1M363 378h1M376 378h2M403 378h2M418 378h1M60 379h1M102 379h1M116 379h2M148 379h1M227 379h1M330 379h1M356 379h1M361 379h2M376 379h1M405 379h1M418 379h1M61 380h1M103 380h1M118 380h1M149 380h2M227 380h1M328 380h2M357 380h1M360 380h1M375 380h1M406 380h1M417 380h1M62 381h1M104 381h1M119 381h1M151 381h1M226 381h1M327 381h1M358 381h2M374 381h1M407 381h1M416 381h1M63 382h1M105 382h1M118 382h1M120 382h1M152 382h2M226 382h1M325 382h2M358 382h1M373 382h1M408 382h1M415 382h1M64 383h1M106 383h1M117 383h1M121 383h1M154 383h2M226 383h1M323 383h2M357 383h2M372 383h1M409 383h2M414 383h1M64 384h1M107 384h1M116 384h1M122 384h2M156 384h2M226 384h1M321 384h2M355 384h2M359 384h1M371 384h1M411 384h1M414 384h1M65 385h1M108 385h1M115 385h1M124 385h1M158 385h1M320 385h1M354 385h1M360 385h1M370 385h1M412 385h2M66 386h1M109 386h1M115 386h1M125 386h1M159 386h2M318 386h2M353 386h1M361 386h1M369 386h1M412 386h1M67 387h1M110 387h2M114 387h1M126 387h2M161 387h2M316 387h2M351 387h2M362 387h1M367 387h2M411 387h1M68 388h1M112 388h2M128 388h1M161 388h1M163 388h2M314 388h2M350 388h1M363 388h1M366 388h1M410 388h1M69 389h1M112 389h2M129 389h1M160 389h1M165 389h2M312 389h2M349 389h1M364 389h2M409 389h1M70 390h1M111 390h1M114 390h1M130 390h2M160 390h1M167 390h2M310 390h2M347 390h2M364 390h1M408 390h1M70 391h1M110 391h1M115 391h1M132 391h1M159 391h1M169 391h2M308 391h2M346 391h1M363 391h1M408 391h1M71 392h1M110 392h1M116 392h2M131 392h1M133 392h1M159 392h1M171 392h3M305 392h3M345 392h1M361 392h2M407 392h1M72 393h1M109 393h1M118 393h1M130 393h1M134 393h2M158 393h1M174 393h2M303 393h2M343 393h3M360 393h1M406 393h1M73 394h1M108 394h1M119 394h1M129 394h1M136 394h1M158 394h1M176 394h3M300 394h3M342 394h1M346 394h1M359 394h1M405 394h1M74 395h1M107 395h1M120 395h2M128 395h1M137 395h2M157 395h1M179 395h2M298 395h2M340 395h2M347 395h1M357 395h2M404 395h1M75 396h1M106 396h1M122 396h1M128 396h1M139 396h2M157 396h1M181 396h3M295 396h3M338 396h2M348 396h1M356 396h1M403 396h1M76 397h1M105 397h1M123 397h1M127 397h1M141 397h1M156 397h1M184 397h3M292 397h3M337 397h1M348 397h1M355 397h1M402 397h1M77 398h1M105 398h1M124 398h3M142 398h2M156 398h1M187 398h3M289 398h3M335 398h2M349 398h1M353 398h2M401 398h1M78 399h1M104 399h1M126 399h1M144 399h2M155 399h1M190 399h3M286 399h3M333 399h2M350 399h1M352 399h1M400 399h1M79 400h1M103 400h1M127 400h1M145 400h2M155 400h1M193 400h4M282 400h4M332 400h1M351 400h1M399 400h1M80 401h1M102 401h1M128 401h2M144 401h1M147 401h2M154 401h1M197 401h4M278 401h4M330 401h2M349 401h2M398 401h1M81 402h1M101 402h1M130 402h1M144 402h1M149 402h2M154 402h1M201 402h4M274 402h4M328 402h2M332 402h1M348 402h1M397 402h1M82 403h1M100 403h1M131 403h2M143 403h1M151 403h3M205 403h6M268 403h6M326 403h2M332 403h1M346 403h2M396 403h1M83 404h1M100 404h1M133 404h1M143 404h1M153 404h2M211 404h6M262 404h6M324 404h2M333 404h1M345 404h1M395 404h1M84 405h1M99 405h1M134 405h2M142 405h1M155 405h2M217 405h10M252 405h10M322 405h2M334 405h1M343 405h2M394 405h1M85 406h1M98 406h1M136 406h2M142 406h1M157 406h2M227 406h25M260 406h1M320 406h2M335 406h1M341 406h2M393 406h1M86 407h1M97 407h1M138 407h1M141 407h1M159 407h2M260 407h1M318 407h2M335 407h1M340 407h1M392 407h1M87 408h2M96 408h1M139 408h3M159 408h1M161 408h2M260 408h1M316 408h2M336 408h1M338 408h2M390 408h2M89 409h1M95 409h1M141 409h2M159 409h1M163 409h2M260 409h1M314 409h2M317 409h1M336 409h2M389 409h1M90 410h1M95 410h1M143 410h2M158 410h1M165 410h3M261 410h1M311 410h3M317 410h1M334 410h2M388 410h1M91 411h1M94 411h1M145 411h1M158 411h1M168 411h2M261 411h1M309 411h2M318 411h1M333 411h1M387 411h1M92 412h2M146 412h2M157 412h1M170 412h2M261 412h1M307 412h2M318 412h1M331 412h2M386 412h1M93 413h1M148 413h2M157 413h1M172 413h3M261 413h1M304 413h3M319 413h1M329 413h2M385 413h1M94 414h2M150 414h2M157 414h1M175 414h3M261 414h1M301 414h3M319 414h1M327 414h2M383 414h2M96 415h1M152 415h2M156 415h1M175 415h1M178 415h3M261 415h1M298 415h3M302 415h1M320 415h1M325 415h2M382 415h1M97 416h1M154 416h3M174 416h1M181 416h3M261 416h1M295 416h3M302 416h1M320 416h1M323 416h2M381 416h1M98 417h1M156 417h3M174 417h1M184 417h3M261 417h1M292 417h3M303 417h1M320 417h3M380 417h1M99 418h2M159 418h2M173 418h1M187 418h4M261 418h1M288 418h4M303 418h1M318 418h2M378 418h2M101 419h1M161 419h2M173 419h1M190 419h5M262 419h1M284 419h4M304 419h1M316 419h2M377 419h1M102 420h1M163 420h3M173 420h1M190 420h1M195 420h4M262 420h1M280 420h4M286 420h1M304 420h1M313 420h3M376 420h1M103 421h2M166 421h2M172 421h1M189 421h1M199 421h5M262 421h1M275 421h5M286 421h1M304 421h1M311 421h2M374 421h2M105 422h1M168 422h3M172 422h1M189 422h1M204 422h5M262 422h1M270 422h5M287 422h1M305 422h1M308 422h3M373 422h1M106 423h1M171 423h2M189 423h1M206 423h1M209 423h7M262 423h9M287 423h1M305 423h3M372 423h1M107 424h2M173 424h3M189 424h1M206 424h1M216 424h10M253 424h10M270 424h1M287 424h1M303 424h3M370 424h2M109 425h1M176 425h3M188 425h1M206 425h1M222 425h1M226 425h27M254 425h1M271 425h1M287 425h1M300 425h3M305 425h1M369 425h1M110 426h2M179 426h3M188 426h1M206 426h1M222 426h1M239 426h1M254 426h1M271 426h1M288 426h1M297 426h3M306 426h1M367 426h2M112 427h1M182 427h4M188 427h1M205 427h1M222 427h1M239 427h1M254 427h1M271 427h1M288 427h1M293 427h4M306 427h1M366 427h1M113 428h2M186 428h3M205 428h1M222 428h1M239 428h1M254 428h1M271 428h1M288 428h1M290 428h3M306 428h1M364 428h2M115 429h1M189 429h4M205 429h1M222 429h1M239 429h1M254 429h1M272 429h1M286 429h4M307 429h1M363 429h1M116 430h2M193 430h5M205 430h1M222 430h1M239 430h1M255 430h1M272 430h1M281 430h5M307 430h1M361 430h2M118 431h1M198 431h5M205 431h1M222 431h1M239 431h1M255 431h1M272 431h1M276 431h5M307 431h1M360 431h1M119 432h2M203 432h5M222 432h1M239 432h1M255 432h1M271 432h5M308 432h1M358 432h2M121 433h1M204 433h1M208 433h7M222 433h1M239 433h1M255 433h1M264 433h7M308 433h1M357 433h1M122 434h2M204 434h1M215 434h11M239 434h1M253 434h11M309 434h1M355 434h2M124 435h2M204 435h1M226 435h27M309 435h1M353 435h2M126 436h2M203 436h1M309 436h1M351 436h2M128 437h1M203 437h1M310 437h1M350 437h1M129 438h2M203 438h1M310 438h1M348 438h2M131 439h2M203 439h1M310 439h1M346 439h2M133 440h2M203 440h1M311 440h1M344 440h2M135 441h2M203 441h1M311 441h1M342 441h2M137 442h2M202 442h1M311 442h1M340 442h2M139 443h2M202 443h1M312 443h1M338 443h2M141 444h2M202 444h1M312 444h1M336 444h2M143 445h2M202 445h1M312 445h1M334 445h2M145 446h2M202 446h1M313 446h1M332 446h2M147 447h3M202 447h1M313 447h1M329 447h3M150 448h2M201 448h1M314 448h1M327 448h2M152 449h3M201 449h1M314 449h1M324 449h3M155 450h2M201 450h1M314 450h1M322 450h2M157 451h3M201 451h1M315 451h1M319 451h3M160 452h2M201 452h1M315 452h1M317 452h2M162 453h3M201 453h1M314 453h3M165 454h3M200 454h1M311 454h3M168 455h3M200 455h1M308 455h3M171 456h4M200 456h1M304 456h4M175 457h3M200 457h1M301 457h3M178 458h4M200 458h1M297 458h4M182 459h4M200 459h1M293 459h4M186 460h4M199 460h1M289 460h4M190 461h5M199 461h1M284 461h5M195 462h5M279 462h5M200 463h6M273 463h6M206 464h7M266 464h7M213 465h11M255 465h11M224 466h31"/>
<path stroke="#c0c0c0" d="M0 0h640M0 1h1M479 1h1M639 1h1M0 2h1M479 2h1M639 2h1M0 3h1M209 3h1M479 3h1M639 3h1M0 4h1M209 4h1M479 4h1M639 4h1M0 5h1M209 5h1M479 5h1M639 5h1M0 6h1M209 6h1M479 6h1M639 6h1M0 7h1M210 7h1M479 7h1M639 7h1M0 8h1M210 8h1M479 8h1M639 8h1M0 9h1M210 9h1M479 9h1M639 9h1M0 10h1M210 10h1M479 10h1M639 10h1M0 11h1M210 11h1M479 11h1M639 11h1M0 12h1M210 12h1M479 12h1M639 12h1M0 13h1M210 13h1M479 13h1M639 13h1M0 14h1M479 14h1M639 14h1M0 15h1M211 15h1M479 15h1M639 15h1M0 16h1M211 16h1M479 16h1M639 16h1M0 17h1M211 17h1M479 17h1M639 17h1M0 18h1M211 18h1M479 18h1M639 18h1M0 19h1M211 19h1M479 19h1M639 19h1M0 20h1M211 20h1M479 20h1M639 20h1M0 21h1M211 21h1M479 21h1M639 21h1M0 22h1M211 22h1M479 22h1M639 22h1M0 23h1M212 23h1M479 23h1M639 23h1M0 24h1M212 24h1M479 24h1M639 24h1M0 25h1M212 25h1M479 25h1M639 25h1M0 26h1M212 26h1M479 26h1M639 26h1M0 27h1M212 27h1M479 27h1M639 27h1M0 28h1M212 28h1M479 28h1M639 28h1M0 29h1M212 29h1M479 29h1M639 29h1M0 30h1M212 30h1M479 30h1M639 30h1M0 31h1M213 31h1M479 31h1M639 31h1M0 32h1M213 32h1M479 32h1M639 32h1M0 33h1M213 33h1M479 33h1M639 33h1M0 34h1M213 34h1M479 34h1M639 34h1M0 35h1M213 35h1M479 35h1M639 35h1M0 36h1M213 36h1M479 36h1M639 36h1M0 37h1M213 37h1M479 37h1M639 37h1M0 38h1M213 38h1M479 38h1M639 38h1M0 39h1M214 39h1M479 39h1M639 39h1M0 40h1M214 40h1M479 40h1M639 40h1M0 41h1M214 41h1M479 41h1M639 41h1M0 42h1M214 42h1M479 42h1M639 42h1M0 43h1M214 43h1M479 43h1M639 43h1M0 44h1M214 44h1M479 44h1M639 44h1M0 45h1M479 45h1M639 45h1M0 46h1M214 46h1M479 46h1M639 46h1M0 47h1M215 47h1M479 47h1M639 47h1M0 48h1M215 48h1M479 48h1M639 48h1M0 49h1M215 49h1M479 49h1M639 49h1M0 50h1M215 50h1M479 50h1M639 50h1M0 51h1M215 51h1M479 51h1M639 51h1M0 52h1M215 52h1M479 52h1M639 52h1M0 53h1M215 53h1M479 53h1M639 53h1M0 54h1M215 54h1M479 54h1M639 54h1M0 55h1M479 55h1M639 55h1M0 56h1M479 56h1M639 56h1M0 57h1M479 57h1M639 57h1M0 58h1M479 58h1M639 58h1M0 59h1M479 59h1M639 59h1M0 60h1M216 60h1M479 60h1M639 60h1M0 61h1M216 61h1M479 61h1M639 61h1M0 62h1M479 62h1M639 62h1M0 63h1M479 63h1M639 63h1M0 64h1M479 64h1M639 64h1M0 65h1M479 65h1M639 65h1M0 66h1M479 66h1M639 66h1M0 67h1M479 67h1M639 67h1M0 68h1M479 68h1M639 68h1M0 69h1M217 69h1M479 69h1M639 69h1M0 70h1M479 70h1M639 70h1M0 71h1M479 71h1M639 71h1M0 72h1M479 72h1M639 72h1M0 73h1M479 73h1M639 73h1M0 74h1M218 74h1M479 74h1M639 74h1M0 75h1M218 75h1M479 75h1M639 75h1M0 76h1M218 76h1M479 76h1M639 76h1M0 77h1M218 77h1M479 77h1M639 77h1M0 78h1M219 78h1M479 78h1M639 78h1M0 79h1M219 79h1M479 79h1M639 79h1M0 80h1M219 80h1M479 80h1M639 80h1M0 81h1M219 81h1M479 81h1M639 81h1M0 82h1M219 82h1M479 82h1M639 82h1M0 83h1M219 83h1M479 83h1M639 83h1M0 84h1M219 84h1M479 84h1M639 84h1M0 85h1M219 85h1M479 85h1M639 85h1M0 86h1M220 86h1M479 86h1M639 86h1M0 87h1M220 87h1M479 87h1M639 87h1M0 88h1M220 88h1M479 88h1M639 88h1M0 89h1M220 89h1M479 89h1M639 89h1M0 90h1M220 90h1M479 90h1M639 90h1M0 91h1M220 91h1M479 91h1M639 91h1M0 92h1M220 92h1M479 92h1M639 92h1M0 93h1M220 93h1M479 93h1M639 93h1M0 94h1M221 94h1M479 94h1M639 94h1M0 95h1M221 95h1M479 95h1M639 95h1M0 96h1M221 96h1M479 96h1M639 96h1M0 97h1M221 97h1M479 97h1M639 97h1M0 98h1M221 98h1M479 98h1M639 98h1M0 99h1M221 99h1M479 99h1M639 99h1M0 100h1M221 100h1M479 100h1M639 100h1M0 101h1M221 101h1M479 101h1M639 101h1M0 102h1M222 102h1M479 102h1M639 102h1M0 103h1M222 103h1M479 103h1M639 103h1M0 104h1M222 104h1M479 104h1M639 104h1M0 105h1M222 105h1M479 105h1M639 105h1M0 106h1M222 106h1M479 106h1M639 106h1M0 107h1M222 107h1M479 107h1M639 107h1M0 108h1M222 108h1M479 108h1M639 108h1M0 109h1M222 109h1M479 109h1M639 109h1M0 110h1M223 110h1M479 110h1M639 110h1M0 111h1M223 111h1M479 111h1M639 111h1M0 112h1M223 112h1M479 112h1M639 112h1M0 113h1M223 113h1M479 113h1M639 113h1M0 114h1M223 114h1M479 114h1M639 114h1M0 115h1M223 115h1M479 115h1M639 115h1M0 116h1M223 116h1M479 116h1M639 116h1M0 117h1M223 117h1M479 117h1M639 117h1M0 118h1M224 118h1M479 118h1M639 118h1M0 119h1M224 119h1M479 119h1M639 119h1M0 120h1M224 120h1M479 120h1M639 120h1M0 121h1M224 121h1M479 121h1M639 121h1M0 122h1M224 122h1M479 122h1M639 122h1M0 123h1M224 123h1M479 123h1M639 123h1M0 124h1M224 124h1M479 124h1M639 124h1M0 125h1M225 125h1M479 125h1M639 125h1M0 126h1M225 126h1M479 126h1M639 126h1M0 127h1M225 127h1M479 127h1M639 127h1M0 128h1M225 128h1M479 128h1M639 128h1M0 129h1M225 129h1M479 129h1M639 129h1M0 130h1M225 130h1M479 130h1M639 130h1M0 131h1M225 131h1M479 131h1M639 131h1M0 132h1M225 132h1M479 132h1M639 132h1M0 133h1M226 133h1M479 133h1M639 133h1M0 134h1M226 134h1M479 134h1M639 134h1M0 135h1M226 135h1M479 135h1M639 135h1M0 136h1M226 136h1M479 136h1M639 136h1M0 137h1M226 137h1M479 137h1M639 137h1M0 138h1M226 138h1M479 138h1M639 138h1M0 139h1M226 139h1M479 139h1M639 139h1M0 140h1M226 140h1M479 140h1M639 140h1M0 141h1M227 141h1M479 141h1M639 141h1M0 142h1M227 142h1M479 142h1M639 142h1M0 143h1M227 143h1M479 143h1M639 143h1M0 144h1M227 144h1M479 144h1M639 144h1M0 145h1M227 145h1M479 145h1M639 145h1M0 146h1M227 146h1M479 146h1M639 146h1M0 147h1M227 147h1M479 147h1M639 147h1M0 148h1M227 148h1M479 148h1M639 148h1M0 149h1M228 149h1M479 149h1M639 149h1M0 150h1M228 150h1M479 150h1M639 150h1M0 151h1M228 151h1M479 151h1M639 151h1M0 152h1M228 152h1M479 152h1M639 152h1M0 153h1M228 153h1M479 153h1M639 153h1M0 154h1M228 154h1M479 154h1M639 154h1M0 155h1M228 155h1M479 155h1M639 155h1M0 156h1M228 156h1M479 156h1M639 156h1M0 157h1M229 157h1M479 157h1M639 157h1M0 158h1M229 158h1M479 158h1M639 158h1M0 159h1M229 159h1M479 159h1M639 159h1M0 160h1M229 160h1M479 160h1M639 160h1M0 161h1M229 161h1M479 161h1M639 161h1M0 162h1M229 162h1M479 162h1M639 162h1M0 163h1M229 163h1M479 163h1M639 163h1M0 164h1M229 164h1M479 164h1M639 164h1M0 165h1M230 165h1M479 165h1M639 165h1M0 166h1M230 166h1M479 166h1M639 166h1M0 167h1M230 167h1M479 167h1M639 167h1M0 168h1M230 168h1M479 168h1M639 168h1M0 169h1M230 169h1M479 169h1M639 169h1M0 170h1M230 170h1M479 170h1M639 170h1M0 171h1M230 171h1M479 171h1M639 171h1M0 172h1M230 172h1M479 172h1M639 172h1M0 173h1M231 173h1M479 173h1M639 173h1M0 174h1M231 174h1M479 174h1M639 174h1M0 175h1M231 175h1M479 175h1M639 175h1M0 176h1M231 176h1M479 176h1M639 176h1M0 177h1M231 177h1M479 177h1M639 177h1M0 178h1M231 178h1M479 178h1M639 178h1M0 179h1M231 179h1M479 179h1M639 179h1M0 180h1M232 180h1M479 180h1M639 180h1M0 181h1M232 181h1M479 181h1M639 181h1M0 182h1M232 182h1M479 182h1M639 182h1M0 183h1M232 183h1M479 183h1M639 183h1M0 184h1M232 184h1M479 184h1M639 184h1M0 185h1M232 185h1M479 185h1M639 185h1M0 186h1M232 186h1M479 186h1M639 186h1M0 187h1M232 187h1M479 187h1M639 187h1M0 188h1M233 188h1M479 188h1M639 188h1M0 189h1M233 189h1M479 189h1M639 189h1M0 190h1M233 190h1M479 190h1M639 190h1M0 191h1M233 191h1M479 191h1M639 191h1M0 192h1M233 192h1M479 192h1M639 192h1M0 193h1M233 193h1M479 193h1M639 193h1M0 194h1M233 194h1M479 194h1M639 194h1M0 195h1M233 195h1M479 195h1M639 195h1M0 196h1M234 196h1M479 196h1M639 196h1M0 197h1M234 197h1M479 197h1M639 197h1M0 198h1M234 198h1M479 198h1M639 198h1M0 199h1M234 199h1M479 199h1M639 199h1M0 200h1M234 200h1M479 200h1M639 200h1M0 201h1M234 201h1M479 201h1M639 201h1M0 202h1M234 202h1M479 202h1M639 202h1M0 203h1M234 203h1M479 203h1M639 203h1M0 204h1M235 204h1M479 204h1M639 204h1M0 205h1M235 205h1M479 205h1M639 205h1M0 206h1M235 206h1M479 206h1M639 206h1M0 207h1M235 207h1M479 207h1M639 207h1M0 208h1M235 208h1M479 208h1M639 208h1M0 209h1M235 209h1M479 209h1M639 209h1M0 210h1M235 210h1M479 210h1M639 210h1M0 211h1M235 211h1M479 211h1M639 211h1M0 212h1M236 212h1M479 212h1M639 212h1M0 213h1M236 213h1M479 213h1M639 213h1M0 214h1M236 214h1M479 214h1M639 214h1M0 215h1M236 215h1M479 215h1M639 215h1M0 216h1M236 216h1M479 216h1M639 216h1M0 217h1M236 217h1M479 217h1M639 217h1M0 218h1M236 218h1M479 218h1M639 218h1M0 219h1M236 219h1M479 219h1M639 219h1M0 220h1M237 220h1M479 220h1M639 220h1M0 221h1M237 221h1M479 221h1M639 221h1M0 222h1M237 222h1M479 222h1M639 222h1M0 223h1M237 223h1M479 223h1M639 223h1M0 224h1M237 224h1M479 224h1M639 224h1M0 225h1M237 225h1M479 225h1M639 225h1M0 226h1M237 226h1M479 226h1M639 226h1M0 227h1M237 227h1M479 227h1M639 227h1M0 228h1M238 228h1M479 228h1M639 228h1M0 229h1M238 229h1M479 229h1M639 229h1M0 230h1M238 230h1M479 230h1M639 230h1M0 231h1M238 231h1M479 231h1M639 231h1M0 232h1M238 232h1M479 232h1M639 232h1M0 233h1M238 233h1M479 233h1M639 233h1M0 234h1M238 234h1M479 234h1M639 234h1M0 235h1M238 235h1M479 235h1M639 235h1M0 236h1M239 236h1M479 236h1M639 236h1M0 237h1M239 237h1M479 237h1M639 237h1M0 238h1M239 238h1M479 238h1M639 238h1M0 239h1M2 239h10M13 239h30M73 239h166M240 239h166M436 239h30M467 239h10M479 239h1M639 239h1M0 240h1M239 240h1M479 240h1M639 240h1M0 241h1M239 241h1M479 241h1M639 241h1M0 242h1M239 242h1M479 242h1M639 242h1M0 243h1M240 243h1M479 243h1M639 243h1M0 244h1M240 244h1M479 244h1M639 244h1M0 245h1M240 245h1M479 245h1M639 245h1M0 246h1M240 246h1M479 246h1M639 246h1M0 247h1M240 247h1M479 247h1M639 247h1M0 248h1M240 248h1M479 248h1M639 248h1M0 249h1M240 249h1M479 249h1M639 249h1M0 250h1M240 250h1M479 250h1M639 250h1M0 251h1M241 251h1M479 251h1M639 251h1M0 252h1M241 252h1M479 252h1M639 252h1M0 253h1M241 253h1M479 253h1M639 253h1M0 254h1M241 254h1M479 254h1M639 254h1M0 255h1M241 255h1M479 255h1M639 255h1M0 256h1M241 256h1M479 256h1M639 256h1M0 257h1M241 257h1M479 257h1M639 257h1M0 258h1M241 258h1M479 258h1M639 258h1M0 259h1M242 259h1M479 259h1M639 259h1M0 260h1M242 260h1M479 260h1M639 260h1M0 261h1M242 261h1M479 261h1M639 261h1M0 262h1M242 262h1M479 262h1M639 262h1M0 263h1M242 263h1M479 263h1M639 263h1M0 264h1M242 264h1M479 264h1M639 264h1M0 265h1M242 265h1M479 265h1M639 265h1M0 266h1M242 266h1M479 266h1M639 266h1M0 267h1M243 267h1M479 267h1M639 267h1M0 268h1M243 268h1M479 268h1M639 268h1M0 269h1M243 269h1M479 269h1M639 269h1M0 270h1M243 270h1M479 270h1M639 270h1M0 271h1M243 271h1M479 271h1M639 271h1M0 272h1M243 272h1M479 272h1M639 272h1M0 273h1M243 273h1M479 273h1M639 273h1M0 274h1M243 274h1M479 274h1M639 274h1M0 275h1M244 275h1M479 275h1M639 275h1M0 276h1M244 276h1M479 276h1M639 276h1M0 277h1M244 277h1M479 277h1M639 277h1M0 278h1M244 278h1M479 278h1M639 278h1M0 279h1M244 279h1M479 279h1M639 279h1M0 280h1M244 280h1M479 280h1M639 280h1M0 281h1M244 281h1M479 281h1M639 281h1M0 282h1M244 282h1M479 282h1M639 282h1M0 283h1M245 283h1M479 283h1M639 283h1M0 284h1M245 284h1M479 284h1M639 284h1M0 285h1M245 285h1M479 285h1M639 285h1M0 286h1M245 286h1M479 286h1M639 286h1M0 287h1M245 287h1M479 287h1M639 287h1M0 288h1M245 288h1M479 288h1M639 288h1M0 289h1M245 289h1M479 289h1M639 289h1M0 290h1M245 290h1M479 290h1M639 290h1M0 291h1M246 291h1M479 291h1M639 291h1M0 292h1M246 292h1M479 292h1M639 292h1M0 293h1M246 293h1M479 293h1M639 293h1M0 294h1M246 294h1M479 294h1M639 294h1M0 295h1M246 295h1M479 295h1M639 295h1M0 296h1M246 296h1M479 296h1M639 296h1M0 297h1M246 297h1M479 297h1M639 297h1M0 298h1M247 298h1M479 298h1M639 298h1M0 299h1M247 299h1M479 299h1M639 299h1M0 300h1M247 300h1M479 300h1M639 300h1M0 301h1M247 301h1M479 301h1M639 301h1M0 302h1M247 302h1M479 302h1M639 302h1M0 303h1M247 303h1M479 303h1M639 303h1M0 304h1M247 304h1M479 304h1M639 304h1M0 305h1M247 305h1M479 305h1M639 305h1M0 306h1M248 306h1M479 306h1M639 306h1M0 307h1M248 307h1M479 307h1M639 307h1M0 308h1M248 308h1M479 308h1M639 308h1M0 309h1M248 309h1M479 309h1M639 309h1M0 310h1M248 310h1M479 310h1M639 310h1M0 311h1M248 311h1M479 311h1M639 311h1M0 312h1M248 312h1M479 312h1M639 312h1M0 313h1M248 313h1M479 313h1M639 313h1M0 314h1M249 314h1M479 314h1M639 314h1M0 315h1M249 315h1M479 315h1M639 315h1M0 316h1M249 316h1M479 316h1M639 316h1M0 317h1M249 317h1M479 317h1M639 317h1M0 318h1M249 318h1M479 318h1M639 318h1M0 319h1M249 319h1M479 319h1M639 319h1M0 320h1M249 320h1M479 320h1M639 320h1M0 321h1M249 321h1M479 321h1M639 321h1M0 322h1M250 322h1M479 322h1M639 322h1M0 323h1M250 323h1M479 323h1M639 323h1M0 324h1M250 324h1M479 324h1M639 324h1M0 325h1M250 325h1M479 325h1M639 325h1M0 326h1M250 326h1M479 326h1M639 326h1M0 327h1M250 327h1M479 327h1M639 327h1M0 328h1M479 328h1M639 328h1M0 329h1M250 329h1M479 329h1M639 329h1M0 330h1M251 330h1M479 330h1M639 330h1M0 331h1M251 331h1M479 331h1M639 331h1M0 332h1M251 332h1M479 332h1M639 332h1M0 333h1M251 333h1M479 333h1M639 333h1M0 334h1M251 334h1M479 334h1M639 334h1M0 335h1M251 335h1M479 335h1M639 335h1M0 336h1M251 336h1M479 336h1M639 336h1M0 337h1M251 337h1M479 337h1M639 337h1M0 338h1M252 338h1M479 338h1M639 338h1M0 339h1M252 339h1M479 339h1M639 339h1M0 340h1M252 340h1M479 340h1M639 340h1M0 341h1M252 341h1M479 341h1M639 341h1M0 342h1M252 342h1M479 342h1M639 342h1M0 343h1M252 343h1M479 343h1M639 343h1M0 344h1M252 344h1M479 344h1M639 344h1M0 345h1M252 345h1M479 345h1M639 345h1M0 346h1M253 346h1M479 346h1M639 346h1M0 347h1M253 347h1M479 347h1M639 347h1M0 348h1M253 348h1M479 348h1M639 348h1M0 349h1M253 349h1M479 349h1M639 349h1M0 350h1M253 350h1M479 350h1M639 350h1M0 351h1M253 351h1M479 351h1M639 351h1M0 352h1M253 352h1M479 352h1M639 352h1M0 353h1M253 353h1M479 353h1M639 353h1M0 354h1M254 354h1M479 354h1M639 354h1M0 355h1M254 355h1M479 355h1M639 355h1M0 356h1M254 356h1M479 356h1M639 356h1M0 357h1M254 357h1M479 357h1M639 357h1M0 358h1M254 358h1M479 358h1M639 358h1M0 359h1M254 359h1M479 359h1M639 359h1M0 360h1M254 360h1M479 360h1M639 360h1M0 361h1M255 361h1M479 361h1M639 361h1M0 362h1M255 362h1M479 362h1M639 362h1M0 363h1M255 363h1M479 363h1M639 363h1M0 364h1M255 364h1M479 364h1M639 364h1M0 365h1M255 365h1M479 365h1M639 365h1M0 366h1M255 366h1M479 366h1M639 366h1M0 367h1M255 367h1M479 367h1M639 367h1M0 368h1M255 368h1M479 368h1M639 368h1M0 369h1M256 369h1M479 369h1M639 369h1M0 370h1M256 370h1M479 370h1M639 370h1M0 371h1M256 371h1M479 371h1M639 371h1M0 372h1M256 372h1M479 372h1M639 372h1M0 373h1M256 373h1M479 373h1M639 373h1M0 374h1M256 374h1M479 374h1M639 374h1M0 375h1M256 375h1M479 375h1M639 375h1M0 376h1M256 376h1M479 376h1M639 376h1M0 377h1M257 377h1M479 377h1M639 377h1M0 378h1M257 378h1M479 378h1M639 378h1M0 379h1M257 379h1M479 379h1M639 379h1M0 380h1M257 380h1M479 380h1M639 380h1M0 381h1M257 381h1M479 381h1M639 381h1M0 382h1M257 382h1M479 382h1M639 382h1M0 383h1M257 383h1M479 383h1M639 383h1M0 384h1M257 384h1M479 384h1M639 384h1M0 385h1M258 385h1M479 385h1M639 385h1M0 386h1M258 386h1M479 386h1M639 386h1M0 387h1M258 387h1M479 387h1M639 387h1M0 388h1M258 388h1M479 388h1M639 388h1M0 389h1M258 389h1M479 389h1M639 389h1M0 390h1M258 390h1M479 390h1M639 390h1M0 391h1M258 391h1M479 391h1M639 391h1M0 392h1M258 392h1M479 392h1M639 392h1M0 393h1M259 393h1M479 393h1M639 393h1M0 394h1M259 394h1M479 394h1M639 394h1M0 395h1M259 395h1M479 395h1M639 395h1M0 396h1M259 396h1M479 396h1M639 396h1M0 397h1M259 397h1M479 397h1M639 397h1M0 398h1M259 398h1M479 398h1M639 398h1M0 399h1M259 399h1M479 399h1M639 399h1M0 400h1M259 400h1M479 400h1M639 400h1M0 401h1M260 401h1M479 401h1M639 401h1M0 402h1M260 402h1M479 402h1M639 402h1M0 403h1M260 403h1M479 403h1M639 403h1M0 404h1M260 404h1M479 404h1M639 404h1M0 405h1M479 405h1M639 405h1M0 406h1M479 406h1M639 406h1M0 407h1M479 407h1M639 407h1M0 408h1M479 408h1M639 408h1M0 409h1M261 409h1M479 409h1M639 409h1M0 410h1M479 410h1M639 410h1M0 411h1M479 411h1M639 411h1M0 412h1M479 412h1M639 412h1M0 413h1M479 413h1M639 413h1M0 414h1M479 414h1M639 414h1M0 415h1M479 415h1M639 415h1M0 416h1M262 416h1M479 416h1M639 416h1M0 417h1M262 417h1M479 417h1M639 417h1M0 418h1M262 418h1M479 418h1M639 418h1M0 419h1M479 419h1M639 419h1M0 420h1M479 420h1M639 420h1M0 421h1M479 421h1M639 421h1M0 422h1M479 422h1M639 422h1M0 423h1M479 423h1M639 423h1M0 424h1M263 424h1M479 424h1M639 424h1M0 425h1M263 425h1M479 425h1M639 425h1M0 426h1M263 426h1M479 426h1M639 426h1M0 427h1M263 427h1M479 427h1M639 427h1M0 428h1M263 428h1M479 428h1M639 428h1M0 429h1M263 429h1M479 429h1M639 429h1M0 430h1M263 430h1M479 430h1M639 430h1M0 431h1M263 431h1M479 431h1M639 431h1M0 432h1M264 432h1M479 432h1M639 432h1M0 433h1M479 433h1M639 433h1M0 434h1M264 434h1M479 434h1M639 434h1M0 435h1M264 435h1M479 435h1M639 435h1M0 436h1M264 436h1M479 436h1M639 436h1M0 437h1M264 437h1M479 437h1M639 437h1M0 438h1M264 438h1M479 438h1M639 438h1M0 439h1M264 439h1M479 439h1M639 439h1M0 440h1M265 440h1M479 440h1M639 440h1M0 441h1M265 441h1M479 441h1M639 441h1M0 442h1M265 442h1M479 442h1M639 442h1M0 443h1M265 443h1M479 443h1M639 443h1M0 444h1M265 444h1M479 444h1M639 444h1M0 445h1M265 445h1M479 445h1M639 445h1M0 446h1M265 446h1M479 446h1M639 446h1M0 447h1M265 447h1M479 447h1M639 447h1M0 448h1M266 448h1M479 448h1M639 448h1M0 449h1M266 449h1M479 449h1M639 449h1M0 450h1M266 450h1M479 450h1M639 450h1M0 451h1M266 451h1M479 451h1M639 451h1M0 452h1M266 452h1M479 452h1M639 452h1M0 453h1M266 453h1M479 453h1M639 453h1M0 454h1M266 454h1M479 454h1M639 454h1M0 455h1M266 455h1M479 455h1M639 455h1M0 456h1M267 456h1M479 456h1M639 456h1M0 457h1M267 457h1M479 457h1M639 457h1M0 458h1M267 458h1M479 458h1M639 458h1M0 459h1M267 459h1M479 459h1M639 459h1M0 460h1M267 460h1M479 460h1M639 460h1M0 461h1M267 461h1M479 461h1M639 461h1M0 462h1M267 462h1M479 462h1M639 462h1M0 463h1M267 463h1M479 463h1M639 463h1M0 464h1M479 464h1M639 464h1M0 465h1M268 465h1M479 465h1M639 465h1M0 466h1M268 466h1M479 466h1M639 466h1M0 467h1M268 467h1M479 467h1M639 467h1M0 468h1M268 468h1M479 468h1M639 468h1M0 469h1M268 469h1M479 469h1M639 469h1M0 470h1M268 470h1M479 470h1M639 470h1M0 471h1M268 471h1M479 471h1M639 471h1M0 472h1M269 472h1M479 472h1M639 472h1M0 473h1M269 473h1M479 473h1M639 473h1M0 474h1M269 474h1M479 474h1M639 474h1M0 475h1M269 475h1M479 475h1M639 475h1M0 476h1M479 476h1M639 476h1M0 477h1M479 477h1M639 477h1M0 478h1M479 478h1M639 478h1M0 479h640"/>
<path stroke="#808080" d="M227 44h1M230 44h1M234 44h1M237 44h1M243 44h1M246 44h1M250 44h1M217 45h1M220 45h1M227 45h1M230 45h1M234 45h1M237 45h1M243 45h1M246 45h1M250 45h1M253 45h1M260 45h1M263 45h1M210 46h1M213 46h1M217 46h1M220 46h1M227 46h1M230 46h1M234 46h1M237 46h1M243 46h1M246 46h1M250 46h1M253 46h1M260 46h1M263 46h1M267 46h1M270 46h1M203 47h1M210 47h1M213 47h1M217 47h1M220 47h1M227 47h1M230 47h1M234 47h1M237 47h1M243 47h1M246 47h1M250 47h1M253 47h1M260 47h1M263 47h1M267 47h1M270 47h1M200 48h1M203 48h1M210 48h1M213 48h1M217 48h1M220 48h1M227 48h1M230 48h1M234 48h1M237 48h1M243 48h1M246 48h1M250 48h1M253 48h1M260 48h1M263 48h1M267 48h1M270 48h1M277 48h1M280 48h1M193 49h1M196 49h1M200 49h1M203 49h1M210 49h1M213 49h1M217 49h1M220 49h1M227 49h1M231 49h1M234 49h1M237 49h1M243 49h1M246 49h1M249 49h1M252 49h1M260 49h1M263 49h1M266 49h1M270 49h1M277 49h1M280 49h1M283 49h1M193 50h1M196 50h1M200 50h1M204 50h1M210 50h1M213 50h1M218 50h1M221 50h1M227 50h1M231 50h1M234 50h1M237 50h1M243 50h1M246 50h1M249 50h1M252 50h1M259 50h1M262 50h1M266 50h1M270 50h1M277 50h1M280 50h1M283 50h1M287 50h1M186 51h1M193 51h1M196 51h1M200 51h1M204 51h1M211 51h1M214 51h1M218 51h1M221 51h1M227 51h1M231 51h1M234 51h1M237 51h1M243 51h1M246 51h1M249 51h1M252 51h1M259 51h1M262 51h1M266 51h1M269 51h1M276 51h1M279 51h1M283 51h1M287 51h1M183 52h1M186 52h1M194 52h1M197 52h1M200 52h1M204 52h1M211 52h1M214 52h1M218 52h1M221 52h1M227 52h1M231 52h1M234 52h1M237 52h1M243 52h1M246 52h1M249 52h1M252 52h1M259 52h1M262 52h1M266 52h1M269 52h1M276 52h1M279 52h1M283 52h1M287 52h1M293 52h1M180 53h1M183 53h1M187 53h1M194 53h1M197 53h1M201 53h1M204 53h1M211 53h1M214 53h1M218 53h1M221 53h1M259 53h1M262 53h1M265 53h1M269 53h1M276 53h1M279 53h1M283 53h1M286 53h1M293 53h1M297 53h1M177 54h1M180 54h1M184 54h1M187 54h1M194 54h1M197 54h1M201 54h1M205 54h1M211 54h1M214 54h1M265 54h1M269 54h1M276 54h1M279 54h1M282 54h1M286 54h1M292 54h1M297 54h1M300 54h1M177 55h1M180 55h1M184 55h1M187 55h1M194 55h1M197 55h1M201 55h1M205 55h1M275 55h1M278 55h1M282 55h1M286 55h1M292 55h1M296 55h1M300 55h1M303 55h1M177 56h1M181 56h1M184 56h1M188 56h1M195 56h1M198 56h1M201 56h1M275 56h1M278 56h1M282 56h1M286 56h1M292 56h1M296 56h1M299 56h1M303 56h1M170 57h1M178 57h1M181 57h1M185 57h1M188 57h1M195 57h1M198 57h1M282 57h1M285 57h1M292 57h1M295 57h1M299 57h1M302 57h1M309 57h1M167 58h1M171 58h1M178 58h1M181 58h1M185 58h1M189 58h1M285 58h1M291 58h1M295 58h1M298 58h1M302 58h1M309 58h1M164 59h1M167 59h1M171 59h1M178 59h1M181 59h1M186 59h1M189 59h1M291 59h1M294 59h1M298 59h1M301 59h1M309 59h1M313 59h1M161 60h1M164 60h1M168 60h1M171 60h1M178 60h1M182 60h1M186 60h1M294 60h1M297 60h1M301 60h1M308 60h1M312 60h1M316 60h1M161 61h1M165 61h1M168 61h1M172 61h1M179 61h1M182 61h1M297 61h1M300 61h1M308 61h1M312 61h1M316 61h1M319 61h1M162 62h1M165 62h1M169 62h1M172 62h1M179 62h1M300 62h1M308 62h1M312 62h1M315 62h1M319 62h1M155 63h1M162 63h1M165 63h1M169 63h1M173 63h1M308 63h1M311 63h1M315 63h1M318 63h1M155 64h1M162 64h1M166 64h1M170 64h1M173 64h1M307 64h1M311 64h1M314 64h1M318 64h1M325 64h1M151 65h1M156 65h1M163 65h1M166 65h1M170 65h1M307 65h1M310 65h1M314 65h1M318 65h1M324 65h1M148 66h1M152 66h1M156 66h1M163 66h1M167 66h1M310 66h1M313 66h1M317 66h1M324 66h1M328 66h1M148 67h1M152 67h1M156 67h1M164 67h1M167 67h1M313 67h1M317 67h1M323 67h1M327 67h1M331 67h1M145 68h1M149 68h1M153 68h1M157 68h1M164 68h1M316 68h1M323 68h1M327 68h1M330 68h1M146 69h1M149 69h1M153 69h1M157 69h1M316 69h1M322 69h1M326 69h1M330 69h1M334 69h1M146 70h1M150 70h1M154 70h1M158 70h1M322 70h1M326 70h1M329 70h1M333 70h1M139 71h1M147 71h1M150 71h1M154 71h1M158 71h1M321 71h1M325 71h1M329 71h1M333 71h1M140 72h1M147 72h1M151 72h1M155 72h1M325 72h1M328 72h1M332 72h1M340 72h1M137 73h1M140 73h1M148 73h1M151 73h1M324 73h1M328 73h1M332 73h1M339 73h1M138 74h1M141 74h1M148 74h1M152 74h1M327 74h1M331 74h1M339 74h1M343 74h1M134 75h1M138 75h1M142 75h1M149 75h1M331 75h1M338 75h1M342 75h1M135 76h1M139 76h1M143 76h1M330 76h1M338 76h1M342 76h1M346 76h1M131 77h1M135 77h1M139 77h1M143 77h1M337 77h1M341 77h1M345 77h1M132 78h1M136 78h1M140 78h1M144 78h1M337 78h1M341 78h1M345 78h1M349 78h1M132 79h1M136 79h1M140 79h1M336 79h1M340 79h1M344 79h1M348 79h1M133 80h1M137 80h1M141 80h1M340 80h1M343 80h1M348 80h1M125 81h1M133 81h1M137 81h1M339 81h1M342 81h1M347 81h1M126 82h1M134 82h1M138 82h1M342 82h1M346 82h1M354 82h1M122 83h1M127 83h1M134 83h1M345 83h1M353 83h1M123 84h1M127 84h1M135 84h1M345 84h1M352 84h1M357 84h1M120 85h1M124 85h1M128 85h1M352 85h1M356 85h1M121 86h1M124 86h1M129 86h1M351 86h1M355 86h1M360 86h1M117 87h1M122 87h1M125 87h1M130 87h1M350 87h1M355 87h1M359 87h1M118 88h1M122 88h1M126 88h1M349 88h1M354 88h1M358 88h1M362 88h1M119 89h1M123 89h1M127 89h1M353 89h1M358 89h1M361 89h1M119 90h1M124 90h1M352 90h1M357 90h1M360 90h1M112 91h1M120 91h1M125 91h1M356 91h1M360 91h1M113 92h1M121 92h1M355 92h1M359 92h1M368 92h1M109 93h1M114 93h1M122 93h1M316 93h1M358 93h1M367 93h1M110 94h1M114 94h1M357 94h1M366 94h1M111 95h1M115 95h1M315 95h1M365 95h1M370 95h1M107 96h1M112 96h1M116 96h1M365 96h1M369 96h1M108 97h1M112 97h1M117 97h1M314 97h1M364 97h1M368 97h1M373 97h1M104 98h1M109 98h1M113 98h1M363 98h1M368 98h1M372 98h1M105 99h1M109 99h1M114 99h1M313 99h1M367 99h1M371 99h1M375 99h1M106 100h1M110 100h1M366 100h1M370 100h1M374 100h1M107 101h1M111 101h1M312 101h1M365 101h1M369 101h1M373 101h1M108 102h1M112 102h1M368 102h1M372 102h1M99 103h1M109 103h1M311 103h1M367 103h1M371 103h1M100 104h1M110 104h1M370 104h1M380 104h1M97 105h1M101 105h1M310 105h1M369 105h1M379 105h1M98 106h1M102 106h1M378 106h1M99 107h1M103 107h1M309 107h1M377 107h1M382 107h1M95 108h1M100 108h1M104 108h1M376 108h1M381 108h1M96 109h1M101 109h1M105 109h1M308 109h1M375 109h1M379 109h2M385 109h1M92 110h1M97 110h2M102 110h1M374 110h1M378 110h1M384 110h1M93 111h1M99 111h1M103 111h1M132 111h1M307 111h1M377 111h1M383 111h1M94 112h1M100 112h1M376 112h1M381 112h2M387 112h1M95 113h2M101 113h1M134 113h1M306 113h1M380 113h1M386 113h1M97 114h1M379 114h1M384 114h2M98 115h1M135 115h1M305 115h1M383 115h1M88 116h1M382 116h1M89 117h1M137 117h1M304 117h1M381 117h1M391 117h1M86 118h1M90 118h2M390 118h1M87 119h1M92 119h1M139 119h1M303 119h1M388 119h2M88 120h2M93 120h1M387 120h1M393 120h1M84 121h1M90 121h1M94 121h1M140 121h1M302 121h1M386 121h1M392 121h1M85 122h1M91 122h1M385 122h1M390 122h2M395 122h1M86 123h2M92 123h1M142 123h1M301 123h1M389 123h1M394 123h1M82 124h1M88 124h1M388 124h1M392 124h2M83 125h1M89 125h1M144 125h1M299 125h1M387 125h1M391 125h1M397 125h1M84 126h2M90 126h1M390 126h1M396 126h1M86 127h1M145 127h1M389 127h1M394 127h2M87 128h1M393 128h1M78 129h1M88 129h1M147 129h1M297 129h1M392 129h1M79 130h2M391 130h1M81 131h1M149 131h1M401 131h1M76 132h1M82 132h1M399 132h2M77 133h2M83 133h2M150 133h1M295 133h1M397 133h2M79 134h1M395 134h2M403 134h1M74 135h1M80 135h1M152 135h1M294 135h1M394 135h1M401 135h2M75 136h2M81 136h2M399 136h2M77 137h2M154 137h1M293 137h1M397 137h2M405 137h1M72 138h1M79 138h2M396 138h1M403 138h2M73 139h2M81 139h1M155 139h1M292 139h1M401 139h2M407 139h1M75 140h2M399 140h2M405 140h2M77 141h2M157 141h1M291 141h1M398 141h1M404 141h1M79 142h1M403 142h1M159 143h1M290 143h1M401 143h2M69 144h1M400 144h1M70 145h2M160 145h1M289 145h1M410 145h1M72 146h2M408 146h2M67 147h1M74 147h2M162 147h1M288 147h1M406 147h2M68 148h2M76 148h1M404 148h2M411 148h2M70 149h2M164 149h1M287 149h1M403 149h1M409 149h2M66 150h1M72 150h2M407 150h2M67 151h2M74 151h1M165 151h1M286 151h1M405 151h2M413 151h1M69 152h2M404 152h1M411 152h2M64 153h1M71 153h2M167 153h1M285 153h1M409 153h2M65 154h2M73 154h1M407 154h2M67 155h2M169 155h1M284 155h1M406 155h1M414 155h2M69 156h2M411 156h3M71 157h1M170 157h1M283 157h1M409 157h2M385 158h1M407 158h2M61 159h2M172 159h1M281 159h1M383 159h1M63 160h3M381 160h1M66 161h2M174 161h1M280 161h1M379 161h1M417 161h2M60 162h2M68 162h2M377 162h1M414 162h3M62 163h2M175 163h1M279 163h1M412 163h2M64 164h2M375 164h1M410 164h2M418 164h2M59 165h1M66 165h2M177 165h1M278 165h1M373 165h1M415 165h3M60 166h3M371 166h1M413 166h2M63 167h2M179 167h1M277 167h1M369 167h1M411 167h2M419 167h2M65 168h2M367 168h1M417 168h2M57 169h3M180 169h1M276 169h1M365 169h1M415 169h2M60 170h4M363 170h1M413 170h2M421 170h1M64 171h2M182 171h1M275 171h1M361 171h1M418 171h3M359 172h1M416 172h2M184 173h1M274 173h1M414 173h2M357 174h1M55 175h2M85 175h1M185 175h1M273 175h1M355 175h1M57 176h2M87 176h1M353 176h1M59 177h2M89 177h1M91 177h1M187 177h1M272 177h1M351 177h1M422 177h3M54 178h2M61 178h2M93 178h1M349 178h1M418 178h4M56 179h2M95 179h1M189 179h1M271 179h1M347 179h1M416 179h2M58 180h2M97 180h1M345 180h1M423 180h3M53 181h2M60 181h2M99 181h1M191 181h1M270 181h1M343 181h1M419 181h4M55 182h2M101 182h1M103 182h1M341 182h1M417 182h2M57 183h2M105 183h1M192 183h1M269 183h1M425 183h2M59 184h2M107 184h1M339 184h1M422 184h3M52 185h2M109 185h1M194 185h1M268 185h1M337 185h1M420 185h2M54 186h4M111 186h1M335 186h1M418 186h2M426 186h2M58 187h2M113 187h1M115 187h1M196 187h1M267 187h1M333 187h1M423 187h3M117 188h1M331 188h1M421 188h2M119 189h1M197 189h1M266 189h1M329 189h1M419 189h2M121 190h1M327 190h1M50 191h3M123 191h1M199 191h1M264 191h1M325 191h1M53 192h4M125 192h1M127 192h1M323 192h1M57 193h2M129 193h1M201 193h1M263 193h1M427 193h3M131 194h1M321 194h1M423 194h4M49 195h5M133 195h1M202 195h1M262 195h1M319 195h1M421 195h2M54 196h4M135 196h1M317 196h1M427 196h3M137 197h1M139 197h1M204 197h1M261 197h1M315 197h1M423 197h4M48 198h3M141 198h1M313 198h1M421 198h2M51 199h4M143 199h1M206 199h1M260 199h1M311 199h1M55 200h2M145 200h1M309 200h1M426 200h5M48 201h3M147 201h1M207 201h1M259 201h1M307 201h1M422 201h4M51 202h4M149 202h1M151 202h1M305 202h1M55 203h2M153 203h1M209 203h1M258 203h1M303 203h1M429 203h3M155 204h1M425 204h4M157 205h1M211 205h1M257 205h1M301 205h1M423 205h2M159 206h1M299 206h1M161 207h1M163 207h1M212 207h1M256 207h1M297 207h1M46 208h5M165 208h1M295 208h1M51 209h4M167 209h1M214 209h1M255 209h1M293 209h1M169 210h1M291 210h1M428 210h5M46 211h3M171 211h1M216 211h1M254 211h1M289 211h1M424 211h4M49 212h4M173 212h1M175 212h1M53 213h2M177 213h1M217 213h1M253 213h1M285 213h1M428 213h5M179 214h1M424 214h4M45 215h5M181 215h1M219 215h1M252 215h1M283 215h1M50 216h4M183 216h1M281 216h1M185 217h1M187 217h1M221 217h1M251 217h1M279 217h1M429 217h5M45 218h5M189 218h1M277 218h1M425 218h4M50 219h4M191 219h1M222 219h1M250 219h1M275 219h1M193 220h1M273 220h1M429 220h5M195 221h1M224 221h1M249 221h1M271 221h1M425 221h4M197 222h1M199 222h1M269 222h1M201 223h1M226 223h1M247 223h1M267 223h1M203 224h1M45 225h4M205 225h1M227 225h1M246 225h1M265 225h1M49 226h4M207 226h1M263 226h1M209 227h1M211 227h1M229 227h1M245 227h1M261 227h1M426 227h9M44 228h5M213 228h1M259 228h1M49 229h4M215 229h1M231 229h1M244 229h1M257 229h1M217 230h1M255 230h1M430 230h5M219 231h1M232 231h1M243 231h1M253 231h1M426 231h4M44 232h9M221 232h1M223 232h1M251 232h1M225 233h1M234 233h1M242 233h1M249 233h1M227 234h1M426 234h9M44 235h9M229 235h1M236 235h1M241 235h1M247 235h1M231 236h1M245 236h1M233 237h1M235 237h1M237 237h1M240 237h1M243 237h1M426 237h9M237 238h1M241 238h1M239 239h1M237 240h1M241 240h1M44 241h9M235 241h1M238 241h1M241 241h1M243 241h1M245 241h1M233 242h1M247 242h1M231 243h1M237 243h1M242 243h1M249 243h1M426 243h9M44 244h9M251 244h1M229 245h1M236 245h1M244 245h1M253 245h1M227 246h1M255 246h1M257 246h1M426 246h9M49 247h4M225 247h1M235 247h1M246 247h1M259 247h1M44 248h5M223 248h1M261 248h1M221 249h1M234 249h1M247 249h1M263 249h1M426 249h4M219 250h1M265 250h1M430 250h5M44 251h9M217 251h1M233 251h1M249 251h1M267 251h1M269 251h1M215 252h1M271 252h1M426 252h4M213 253h1M232 253h1M251 253h1M273 253h1M430 253h4M275 254h1M211 255h1M231 255h1M252 255h1M277 255h1M209 256h1M279 256h1M281 256h1M50 257h4M207 257h1M229 257h1M254 257h1M283 257h1M45 258h5M205 258h1M285 258h1M203 259h1M228 259h1M256 259h1M287 259h1M425 259h4M50 260h4M201 260h1M289 260h1M429 260h5M45 261h5M199 261h1M227 261h1M257 261h1M291 261h1M293 261h1M197 262h1M295 262h1M425 262h4M195 263h1M226 263h1M259 263h1M297 263h1M429 263h5M51 264h4M299 264h1M46 265h5M193 265h1M225 265h1M261 265h1M301 265h1M424 265h2M191 266h1M303 266h1M305 266h1M426 266h4M51 267h4M189 267h1M224 267h1M262 267h1M307 267h1M430 267h3M46 268h5M187 268h1M309 268h1M185 269h1M223 269h1M264 269h1M311 269h1M424 269h4M183 270h1M313 270h1M428 270h5M181 271h1M222 271h1M266 271h1M315 271h1M317 271h1M179 272h1M319 272h1M54 273h2M177 273h1M221 273h1M267 273h1M321 273h1M50 274h4M323 274h1M47 275h3M175 275h1M220 275h1M269 275h1M325 275h1M422 275h2M173 276h1M327 276h1M329 276h1M424 276h4M53 277h4M171 277h1M219 277h1M271 277h1M331 277h1M428 277h3M48 278h5M169 278h1M333 278h1M422 278h2M167 279h1M218 279h1M272 279h1M335 279h1M424 279h4M56 280h2M165 280h1M337 280h1M428 280h3M52 281h4M163 281h1M217 281h1M274 281h1M339 281h1M341 281h1M49 282h3M161 282h1M343 282h1M421 282h4M56 283h2M159 283h1M216 283h1M276 283h1M345 283h1M425 283h5M52 284h4M157 284h1M347 284h1M49 285h3M215 285h1M277 285h1M349 285h1M420 285h2M155 286h1M422 286h4M153 287h1M214 287h1M279 287h1M426 287h3M151 288h1M357 288h1M58 289h2M149 289h1M212 289h1M281 289h1M359 289h1M56 290h2M147 290h1M361 290h1M53 291h3M145 291h1M211 291h1M282 291h1M363 291h1M365 291h1M419 291h2M51 292h2M59 292h2M143 292h1M367 292h1M421 292h4M57 293h2M141 293h1M210 293h1M284 293h1M369 293h1M425 293h2M54 294h3M139 294h1M371 294h1M418 294h2M52 295h2M209 295h1M286 295h1M373 295h1M420 295h2M60 296h2M137 296h1M375 296h1M377 296h1M422 296h2M56 297h4M135 297h1M208 297h1M287 297h1M379 297h1M417 297h2M424 297h2M53 298h3M133 298h1M381 298h1M419 298h2M61 299h2M131 299h1M207 299h1M289 299h1M383 299h1M421 299h2M57 300h4M129 300h1M385 300h1M416 300h2M423 300h2M54 301h3M127 301h1M206 301h1M291 301h1M387 301h1M389 301h1M418 301h2M125 302h1M391 302h1M420 302h2M123 303h1M205 303h1M293 303h1M393 303h1M422 303h2M121 304h1M63 305h2M204 305h1M294 305h1M61 306h2M119 306h1M58 307h3M117 307h1M203 307h1M413 307h2M57 308h1M64 308h2M115 308h1M415 308h4M62 309h2M113 309h1M202 309h1M298 309h1M419 309h3M60 310h2M111 310h1M412 310h2M58 311h2M66 311h2M109 311h1M201 311h1M299 311h1M414 311h2M64 312h2M107 312h1M416 312h3M61 313h3M105 313h1M200 313h1M301 313h1M411 313h2M419 313h1M59 314h2M67 314h2M103 314h1M413 314h2M65 315h2M199 315h1M303 315h1M415 315h2M62 316h3M101 316h1M409 316h2M417 316h2M60 317h2M99 317h1M198 317h1M304 317h1M411 317h2M97 318h1M413 318h3M95 319h1M197 319h1M306 319h1M416 319h2M70 320h2M93 320h1M68 321h2M195 321h1M308 321h1M407 321h1M65 322h3M408 322h2M63 323h2M72 323h1M194 323h1M309 323h1M410 323h2M70 324h2M405 324h1M412 324h2M68 325h2M193 325h1M311 325h1M406 325h2M414 325h1M66 326h2M74 326h1M408 326h2M65 327h1M72 327h2M192 327h1M313 327h1M404 327h1M410 327h2M70 328h2M405 328h2M412 328h1M68 329h2M75 329h1M191 329h1M314 329h1M407 329h2M66 330h2M73 330h2M402 330h1M409 330h2M71 331h2M190 331h1M316 331h1M403 331h2M411 331h1M69 332h2M405 332h2M68 333h1M189 333h1M318 333h1M407 333h2M78 334h1M409 334h1M76 335h2M188 335h1M319 335h1M75 336h1M399 336h1M74 337h1M80 337h1M187 337h1M321 337h1M400 337h2M72 338h2M78 338h2M402 338h2M71 339h1M76 339h2M186 339h1M323 339h1M397 339h1M404 339h2M74 340h2M82 340h1M398 340h2M406 340h1M73 341h1M80 341h2M185 341h1M324 341h1M400 341h2M78 342h2M396 342h2M402 342h2M76 343h2M84 343h1M184 343h1M326 343h1M398 343h1M404 343h1M75 344h1M82 344h2M399 344h1M80 345h2M183 345h1M328 345h1M394 345h2M400 345h2M78 346h2M396 346h1M402 346h1M77 347h1M182 347h1M329 347h1M397 347h1M87 348h1M398 348h2M86 349h1M181 349h1M331 349h1M390 349h1M400 349h1M85 350h1M391 350h1M83 351h2M89 351h1M180 351h1M333 351h1M392 351h1M82 352h1M88 352h1M388 352h1M393 352h2M81 353h1M87 353h1M91 353h1M179 353h1M334 353h1M389 353h1M395 353h1M85 354h2M90 354h1M390 354h1M396 354h1M84 355h1M89 355h1M177 355h1M336 355h1M386 355h1M391 355h2M83 356h1M87 356h2M93 356h1M387 356h1M393 356h1M86 357h1M92 357h1M176 357h1M338 357h1M384 357h1M388 357h1M394 357h1M85 358h1M91 358h1M385 358h1M389 358h2M89 359h2M175 359h1M339 359h1M386 359h1M391 359h1M88 360h1M387 360h2M392 360h1M87 361h1M97 361h1M174 361h1M341 361h1M389 361h1M96 362h1M390 362h1M95 363h1M173 363h1M343 363h1M380 363h1M93 364h2M99 364h1M381 364h1M92 365h1M98 365h1M172 365h1M344 365h1M377 365h1M382 365h2M91 366h1M96 366h2M102 366h1M378 366h1M384 366h1M95 367h1M101 367h1M171 367h1M346 367h1M375 367h1M379 367h1M385 367h1M94 368h1M100 368h1M104 368h1M376 368h1M380 368h2M386 368h1M93 369h1M98 369h2M103 369h1M170 369h1M373 369h1M377 369h1M382 369h1M97 370h1M102 370h1M374 370h1M378 370h1M383 370h1M96 371h1M101 371h1M169 371h1M375 371h1M379 371h1M100 372h1M376 372h1M380 372h1M99 373h1M109 373h1M168 373h1M377 373h1M381 373h1M98 374h1M108 374h1M368 374h1M378 374h1M107 375h1M111 375h1M167 375h1M369 375h1M379 375h1M106 376h1M110 376h1M366 376h1M370 376h1M105 377h1M109 377h1M113 377h1M166 377h1M367 377h1M371 377h1M104 378h1M108 378h1M112 378h1M368 378h1M372 378h1M103 379h1M107 379h1M111 379h1M165 379h1M364 379h1M369 379h1M373 379h1M106 380h1M110 380h1M115 380h1M365 380h1M369 380h1M374 380h1M105 381h1M110 381h1M114 381h1M164 381h1M361 381h1M366 381h1M370 381h1M109 382h1M113 382h1M362 382h1M366 382h1M371 382h1M108 383h1M113 383h1M163 383h1M363 383h1M367 383h1M112 384h1M121 384h1M364 384h1M368 384h1M111 385h1M120 385h1M162 385h1M356 385h1M364 385h1M369 385h1M110 386h1M119 386h1M123 386h1M357 386h1M365 386h1M118 387h1M122 387h1M353 387h1M358 387h1M366 387h1M118 388h1M121 388h1M126 388h1M354 388h1M359 388h1M117 389h1M120 389h1M125 389h1M351 389h1M355 389h1M359 389h1M116 390h1M120 390h1M124 390h1M129 390h1M352 390h1M356 390h1M360 390h1M119 391h1M123 391h1M128 391h1M348 391h1M353 391h1M356 391h1M361 391h1M118 392h1M123 392h1M127 392h1M349 392h1M354 392h1M357 392h1M122 393h1M126 393h1M350 393h1M354 393h1M358 393h1M121 394h1M126 394h1M133 394h1M343 394h1M351 394h1M355 394h1M125 395h1M133 395h1M344 395h1M351 395h1M356 395h1M124 396h1M132 396h1M136 396h1M340 396h1M344 396h1M352 396h1M131 397h1M136 397h1M139 397h1M341 397h1M345 397h1M353 397h1M130 398h1M135 398h1M138 398h1M337 398h1M341 398h1M345 398h1M130 399h1M134 399h1M138 399h1M142 399h1M338 399h1M342 399h1M346 399h1M129 400h1M133 400h1M137 400h1M141 400h1M334 400h1M338 400h1M342 400h1M346 400h1M133 401h1M137 401h1M141 401h1M335 401h1M339 401h1M343 401h1M347 401h1M132 402h1M136 402h1M140 402h1M148 402h1M335 402h1M339 402h1M343 402h1M136 403h1M140 403h1M147 403h1M329 403h1M336 403h1M340 403h1M344 403h1M135 404h1M139 404h1M147 404h1M151 404h1M326 404h1M330 404h1M337 404h1M340 404h1M139 405h1M146 405h1M150 405h1M154 405h1M327 405h1M330 405h1M338 405h1M341 405h1M138 406h1M146 406h1M150 406h1M153 406h1M323 406h1M327 406h1M331 406h1M338 406h1M145 407h1M149 407h1M153 407h1M157 407h1M320 407h1M324 407h1M328 407h1M331 407h1M339 407h1M145 408h1M149 408h1M152 408h1M156 408h1M320 408h1M324 408h1M328 408h1M332 408h1M144 409h1M148 409h1M152 409h1M156 409h1M162 409h1M321 409h1M325 409h1M329 409h1M332 409h1M148 410h1M151 410h1M155 410h1M162 410h1M314 410h1M321 410h1M325 410h1M329 410h1M333 410h1M147 411h1M151 411h1M155 411h1M161 411h1M165 411h1M311 411h1M314 411h1M322 411h1M326 411h1M330 411h1M150 412h1M154 412h1M161 412h1M165 412h1M168 412h1M311 412h1M315 412h1M322 412h1M326 412h1M330 412h1M154 413h1M160 413h1M164 413h1M168 413h1M171 413h1M308 413h1M312 413h1M315 413h1M322 413h1M327 413h1M153 414h1M160 414h1M164 414h1M167 414h1M171 414h1M305 414h1M308 414h1M312 414h1M316 414h1M323 414h1M160 415h1M163 415h1M167 415h1M170 415h1M305 415h1M309 415h1M313 415h1M316 415h1M323 415h1M159 416h1M163 416h1M166 416h1M170 416h1M178 416h1M299 416h1M306 416h1M309 416h1M313 416h1M316 416h1M159 417h1M162 417h1M166 417h1M170 417h1M178 417h1M181 417h1M296 417h1M299 417h1M306 417h1M310 417h1M313 417h1M317 417h1M162 418h1M166 418h1M170 418h1M177 418h1M181 418h1M184 418h1M292 418h1M296 418h1M300 418h1M307 418h1M310 418h1M314 418h1M317 418h1M165 419h1M169 419h1M177 419h1M180 419h1M184 419h1M187 419h1M289 419h1M292 419h1M297 419h1M300 419h1M307 419h1M311 419h1M314 419h1M169 420h1M176 420h1M180 420h1M183 420h1M187 420h1M193 420h1M289 420h1M293 420h1M297 420h1M300 420h1M307 420h1M311 420h1M169 421h1M176 421h1M179 421h1M183 421h1M186 421h1M193 421h1M196 421h1M280 421h1M283 421h1M290 421h1M293 421h1M297 421h1M300 421h1M308 421h1M175 422h1M179 422h1M182 422h1M186 422h1M192 422h1M196 422h1M200 422h1M203 422h1M277 422h1M280 422h1M283 422h1M290 422h1M294 422h1M297 422h1M301 422h1M175 423h1M178 423h1M182 423h1M186 423h1M192 423h1M196 423h1M200 423h1M203 423h1M273 423h1M277 423h1M281 423h1M284 423h1M291 423h1M294 423h1M298 423h1M301 423h1M178 424h1M181 424h1M186 424h1M192 424h1M196 424h1M199 424h1M202 424h1M209 424h1M213 424h1M264 424h1M267 424h1M273 424h1M277 424h1M281 424h1M284 424h1M291 424h1M294 424h1M298 424h1M301 424h1M181 425h1M185 425h1M192 425h1M195 425h1M199 425h1M202 425h1M209 425h1M213 425h1M216 425h1M219 425h1M257 425h1M260 425h1M264 425h1M267 425h1M274 425h1M277 425h1M281 425h1M284 425h1M291 425h1M295 425h1M298 425h1M185 426h1M191 426h1M195 426h1M199 426h1M202 426h1M209 426h1M212 426h1M216 426h1M219 426h1M226 426h1M229 426h1M232 426h1M235 426h1M241 426h1M244 426h1M247 426h1M251 426h1M257 426h1M260 426h1M264 426h1M267 426h1M274 426h1M278 426h1M281 426h1M284 426h1M292 426h1M295 426h1M191 427h1M195 427h1M199 427h1M202 427h1M209 427h1M212 427h1M216 427h1M219 427h1M226 427h1M229 427h1M232 427h1M235 427h1M241 427h1M244 427h1M247 427h1M251 427h1M257 427h1M260 427h1M264 427h1M267 427h1M274 427h1M278 427h1M282 427h1M285 427h1M292 427h1M191 428h1M195 428h1M198 428h1M201 428h1M208 428h1M212 428h1M216 428h1M219 428h1M226 428h1M229 428h1M232 428h1M235 428h1M241 428h1M244 428h1M247 428h1M251 428h1M257 428h1M260 428h1M265 428h1M268 428h1M274 428h1M278 428h1M282 428h1M285 428h1M195 429h1M198 429h1M201 429h1M208 429h1M212 429h1M215 429h1M218 429h1M226 429h1M229 429h1M232 429h1M235 429h1M241 429h1M244 429h1M247 429h1M251 429h1M258 429h1M261 429h1M265 429h1M268 429h1M275 429h1M278 429h1M282 429h1M285 429h1M198 430h1M201 430h1M208 430h1M211 430h1M215 430h1M218 430h1M225 430h1M228 430h1M232 430h1M235 430h1M241 430h1M244 430h1M248 430h1M251 430h1M258 430h1M261 430h1M265 430h1M268 430h1M275 430h1M278 430h1M208 431h1M211 431h1M215 431h1M218 431h1M225 431h1M228 431h1M232 431h1M235 431h1M241 431h1M244 431h1M248 431h1M251 431h1M258 431h1M261 431h1M265 431h1M268 431h1M275 431h1M208 432h1M211 432h1M215 432h1M218 432h1M225 432h1M228 432h1M232 432h1M235 432h1M241 432h1M244 432h1M248 432h1M251 432h1M258 432h1M261 432h1M265 432h1M268 432h1M215 433h1M218 433h1M225 433h1M228 433h1M232 433h1M235 433h1M241 433h1M244 433h1M248 433h1M251 433h1M258 433h1M261 433h1M228 434h1M232 434h1M235 434h1M241 434h1M244 434h1M248 434h1M251 434h1"/>
<path stroke="#ff0000" d="M220 19h5M219 20h1M225 20h1M218 21h1M226 21h1M217 22h1M227 22h1M216 23h1M228 23h1M248 23h3M216 24h1M228 24h1M246 24h2M251 24h2M216 25h1M228 25h1M246 25h1M252 25h1M216 26h1M228 26h1M245 26h1M253 26h1M216 27h1M228 27h1M245 27h1M249 27h1M253 27h1M217 28h1M227 28h1M245 28h1M253 28h1M218 29h1M226 29h1M246 29h1M252 29h1M218 30h1M226 30h1M246 30h2M251 30h2M214 31h1M218 31h1M226 31h1M248 31h3M215 32h1M217 32h1M227 32h1M216 33h1M228 33h1M229 34h1M230 35h1M300 67h1M294 68h2M299 68h1M296 69h1M299 69h1M296 70h1M299 70h1M295 71h1M299 71h1M295 72h1M299 72h1M294 73h1M299 73h1M294 74h8M299 75h1M307 88h1M306 89h1M296 90h2M305 90h1M298 91h1M305 91h1M299 92h1M305 92h1M299 93h1M305 93h1M299 94h1M305 94h1M298 95h1M305 95h1M298 96h1M305 96h1M297 97h1M305 97h1M297 98h1M305 98h1M296 99h1M305 99h1M296 100h1M305 100h1M295 101h1M305 101h1M295 102h15M305 103h1M305 104h1M295 116h1M294 117h3M293 118h1M295 118h1M283 119h2M292 119h1M285 120h1M292 120h1M286 121h1M292 121h1M286 122h1M292 122h1M286 123h1M292 123h1M285 124h1M292 124h1M285 125h1M292 125h1M284 126h1M292 126h1M284 127h1M292 127h1M283 128h1M292 128h1M283 129h1M292 129h1M282 130h1M292 130h1M282 131h15M292 132h1M292 133h1M282 145h1M281 146h3M282 147h1M624 186h1M626 186h1M628 186h1M625 187h1M627 187h1M629 187h1M625 188h1M627 188h1M629 188h1M625 189h1M627 189h1M629 189h1M625 190h1M627 190h1M629 190h1M625 191h1M627 191h1M629 191h1M625 192h1M627 192h1M629 192h1M632 192h1M625 193h1M627 193h1M629 193h1M632 193h1M630 194h2M624 226h1M632 226h1M625 227h1M631 227h1M626 228h1M630 228h1M626 229h1M630 229h1M624 230h9M626 231h1M630 231h1M626 232h1M630 232h1M625 233h1M631 233h1M624 234h1M632 234h1M65 257h3M66 258h2M65 259h1M67 259h1M61 260h2M64 260h1M60 261h1M63 261h1M59 262h1M64 262h1M59 263h1M64 263h1M60 264h1M63 264h1M61 265h2M627 267h3M625 268h2M630 268h2M624 269h1M629 269h1M632 269h1M625 270h2M629 270h1M632 270h1M624 271h1M627 271h1M630 271h2M624 272h1M627 272h1M632 272h1M625 273h2M630 273h2M627 274h3M349 286h5M347 287h2M354 287h2M346 288h1M356 288h1M345 289h1M357 289h1M344 290h1M358 290h1M344 291h1M358 291h1M343 292h1M359 292h1M343 293h1M359 293h1M343 294h1M351 294h1M359 294h1M343 295h1M359 295h1M323 296h1M343 296h1M359 296h1M322 297h3M344 297h1M358 297h1M323 298h1M344 298h1M358 298h1M345 299h1M357 299h1M346 300h1M356 300h1M347 301h2M354 301h2M349 302h5M375 302h5M373 303h2M380 303h2M372 304h1M382 304h1M371 305h1M383 305h1M370 306h1M384 306h1M370 307h1M384 307h1M369 308h1M385 308h1M369 309h1M385 309h1M369 310h1M377 310h1M385 310h1M369 311h1M385 311h1M369 312h1M385 312h1M370 313h1M384 313h1M349 314h1M370 314h1M384 314h1M348 315h3M371 315h1M383 315h1M349 316h1M372 316h1M382 316h1M627 316h3M373 317h2M380 317h2M625 317h2M630 317h2M375 318h5M625 318h1M631 318h1M303 319h1M624 319h1M632 319h1M302 320h3M624 320h1M628 320h1M632 320h1M303 321h1M425 321h3M435 321h3M624 321h1M632 321h1M424 322h1M428 322h1M434 322h1M438 322h1M625 322h1M631 322h1M423 323h1M429 323h1M433 323h1M439 323h1M625 323h2M630 323h2M423 324h1M429 324h1M433 324h1M439 324h1M627 324h3M423 325h1M429 325h1M433 325h1M439 325h1M424 326h1M430 326h1M432 326h1M438 326h1M425 327h1M430 327h1M432 327h1M437 327h1M430 328h1M432 328h1M319 329h6M430 329h1M432 329h1M323 330h2M431 330h1M322 331h1M324 331h1M431 331h1M53 332h1M321 332h1M324 332h1M431 332h1M47 333h2M52 333h1M320 333h1M324 333h1M431 333h1M49 334h1M52 334h1M319 334h1M324 334h1M431 334h1M49 335h1M52 335h1M311 335h5M318 335h1M431 335h1M48 336h1M52 336h1M310 336h1M316 336h2M431 336h1M48 337h1M52 337h1M309 337h1M317 337h1M431 337h1M47 338h1M52 338h1M308 338h1M318 338h1M47 339h8M308 339h1M318 339h1M52 340h1M308 340h1M318 340h1M308 341h1M318 341h1M308 342h1M318 342h1M309 343h1M317 343h1M322 343h1M310 344h1M316 344h1M321 344h3M311 345h5M322 345h1M419 350h3M420 351h2M69 352h5M419 352h1M421 352h1M72 353h2M338 353h6M415 353h2M418 353h1M71 354h1M73 354h1M342 354h2M414 354h1M417 354h1M70 355h1M73 355h1M341 355h1M343 355h1M413 355h1M418 355h1M69 356h1M73 356h1M340 356h1M343 356h1M367 356h3M413 356h1M418 356h1M630 356h3M68 357h1M339 357h1M343 357h1M365 357h2M370 357h2M414 357h1M417 357h1M631 357h2M59 358h1M67 358h1M338 358h1M343 358h1M365 358h1M371 358h1M415 358h2M630 358h1M632 358h1M60 359h1M66 359h1M330 359h5M337 359h1M364 359h1M372 359h1M626 359h2M629 359h1M61 360h1M65 360h1M329 360h1M335 360h2M364 360h1M368 360h1M372 360h1M625 360h1M628 360h1M62 361h1M64 361h1M328 361h1M336 361h1M364 361h1M372 361h1M624 361h1M629 361h1M63 362h1M327 362h1M337 362h1M365 362h1M371 362h1M624 362h1M629 362h1M62 363h1M64 363h1M327 363h1M337 363h1M365 363h2M370 363h2M625 363h1M628 363h1M61 364h1M65 364h1M327 364h1M337 364h1M367 364h3M626 364h2M60 365h1M66 365h1M327 365h1M337 365h1M59 366h1M67 366h1M327 366h1M337 366h1M631 366h1M58 367h1M328 367h1M336 367h1M625 367h2M630 367h1M57 368h1M329 368h1M335 368h1M627 368h1M630 368h1M330 369h5M627 369h1M630 369h1M626 370h1M630 370h1M626 371h1M630 371h1M625 372h1M630 372h1M625 373h8M630 374h1"/>
<path stroke="#00ff00" d="M140 46h1M144 46h1M141 47h3M140 48h1M144 48h1M140 49h1M144 49h1M140 50h1M144 50h1M141 51h3M142 52h1M140 53h5M142 54h1M407 110h1M421 110h1M408 111h1M420 111h1M409 112h11M411 113h1M417 113h1M107 114h1M113 114h1M411 114h1M417 114h1M108 115h1M112 115h1M411 115h1M417 115h1M108 116h1M110 116h1M112 116h1M411 116h1M417 116h1M108 117h5M411 117h1M417 117h1M108 118h1M110 118h1M112 118h1M411 118h1M417 118h1M107 119h1M110 119h1M113 119h1M411 119h1M417 119h1M109 120h3M411 120h1M417 120h1M109 121h1M111 121h1M411 121h1M417 121h1M110 122h1M411 122h1M417 122h1M411 123h1M417 123h1M409 124h11M408 125h1M420 125h1M407 126h1M421 126h1M426 138h1M430 138h1M427 139h3M426 140h1M430 140h1M426 141h1M430 141h1M426 142h1M430 142h1M427 143h3M428 144h1M45 145h5M426 145h5M44 146h1M50 146h1M428 146h1M43 147h1M51 147h1M43 148h1M51 148h1M43 149h1M51 149h1M44 150h1M50 150h1M39 151h7M49 151h7M287 154h1M39 155h17M287 156h1M287 158h1M287 160h1M287 162h1M287 164h1M287 166h1M287 168h1M287 170h1M287 172h1M287 174h1M287 176h1M287 178h1M287 180h1M287 182h1M381 183h1M393 183h1M287 184h1M382 184h1M392 184h1M383 185h1M391 185h1M287 186h1M383 186h1M391 186h1M383 187h1M387 187h1M391 187h1M287 188h1M383 188h1M387 188h1M391 188h1M383 189h9M287 190h1M383 190h1M387 190h1M391 190h1M383 191h1M387 191h1M391 191h1M287 192h1M351 192h1M363 192h1M382 192h1M387 192h1M392 192h1M352 193h1M362 193h1M381 193h1M387 193h1M393 193h1M287 194h1M353 194h1M361 194h1M387 194h1M353 195h1M361 195h1M386 195h3M287 196h1M353 196h1M357 196h1M361 196h1M366 196h1M385 196h1M389 196h1M353 197h1M357 197h1M361 197h1M365 197h3M385 197h1M389 197h1M287 198h1M353 198h9M366 198h1M385 198h1M389 198h1M353 199h1M357 199h1M361 199h1M386 199h3M287 200h1M353 200h1M357 200h1M361 200h1M352 201h1M357 201h1M362 201h1M287 202h1M351 202h1M357 202h1M363 202h1M357 203h1M287 204h1M356 204h3M355 205h1M359 205h1M287 206h1M337 206h1M355 206h1M359 206h1M625 206h1M628 206h1M630 206h2M336 207h3M355 207h1M359 207h1M624 207h2M628 207h2M632 207h1M287 208h1M337 208h1M356 208h3M625 208h1M627 208h1M629 208h1M632 208h1M625 209h1M627 209h1M630 209h2M287 210h1M625 210h1M627 210h1M631 210h1M626 211h1M632 211h1M287 212h1M626 212h1M632 212h1M626 213h1M632 213h1M287 214h1M631 214h1M287 216h1M287 218h1M287 220h1M287 222h1M287 224h1M287 226h1M287 228h1M287 230h1M287 232h1M287 234h1M287 236h1M287 238h1M287 240h1M287 242h1M287 244h1M287 246h1M625 246h1M631 246h1M626 247h1M630 247h1M287 248h1M627 248h3M626 249h1M630 249h1M287 250h1M625 250h1M631 250h1M625 251h1M631 251h1M287 252h1M625 252h1M631 252h1M626 253h1M630 253h1M287 254h1M627 254h3M287 256h1M287 258h1M287 260h1M287 262h1M287 264h1M287 266h1M287 268h1M287 270h1M287 272h1M287 274h1M287 276h1M287 278h1M287 280h1M287 282h1M287 284h1M287 286h1M407 286h1M411 286h1M624 286h1M626 286h1M628 286h1M408 287h3M625 287h1M627 287h1M629 287h1M631 287h1M287 288h1M407 288h1M411 288h1M625 288h1M627 288h1M629 288h3M407 289h1M411 289h1M625 289h1M627 289h1M629 289h1M631 289h1M287 290h1M407 290h1M411 290h1M625 290h1M627 290h1M629 290h1M631 290h1M408 291h3M625 291h1M627 291h1M629 291h1M631 291h1M287 292h1M409 292h1M625 292h1M627 292h1M629 292h1M631 292h1M407 293h5M625 293h1M627 293h1M630 293h1M287 294h1M409 294h1M629 294h1M631 294h1M287 296h1M287 298h1M287 300h1M287 302h1M287 304h1M287 306h1M287 308h1M287 310h1M287 312h1M287 314h1M287 316h1M287 318h1M287 320h1M287 322h1M287 324h1M289 327h1M288 328h3M289 329h1M626 336h1M630 336h1M627 337h3M626 338h1M630 338h1M296 339h1M304 339h1M626 339h1M630 339h1M297 340h1M303 340h1M626 340h1M630 340h1M298 341h5M627 341h3M297 342h1M303 342h1M628 342h1M296 343h1M304 343h1M626 343h5M296 344h1M304 344h1M628 344h1M296 345h1M304 345h1M296 346h1M304 346h1M296 347h1M304 347h1M297 348h1M303 348h1M298 349h5M300 350h1M300 351h1M300 352h1M296 353h9M300 354h1M300 355h1M305 355h1M304 356h3M305 357h1M312 366h1M320 366h1M313 367h1M319 367h1M314 368h5M313 369h1M319 369h1M312 370h1M320 370h1M312 371h1M320 371h1M312 372h1M320 372h1M312 373h1M320 373h1M312 374h1M320 374h1M313 375h1M319 375h1M314 376h5M316 377h1M316 378h1M316 379h1M312 380h9M316 381h1M316 382h1M625 386h1M631 386h1M626 387h1M630 387h1M626 388h1M628 388h1M630 388h1M626 389h5M626 390h1M628 390h1M630 390h1M625 391h1M628 391h1M631 391h1M627 392h3M627 393h1M629 393h1M628 394h1M179 403h1M183 403h1M180 404h3M179 405h1M183 405h1M179 406h1M183 406h1M179 407h1M183 407h1M180 408h3M181 409h1M179 410h5M181 411h1M252 443h1M258 443h1M264 443h1M251 444h2M257 444h2M263 444h1M251 445h1M253 445h1M257 445h1M259 445h1M263 445h1M250 446h1M253 446h1M256 446h1M259 446h1M262 446h1M226 447h1M232 447h1M249 447h1M253 447h1M255 447h1M259 447h1M261 447h1M227 448h1M231 448h1M249 448h1M254 448h2M260 448h2M227 449h1M229 449h1M231 449h1M248 449h1M254 449h1M260 449h1M227 450h5M227 451h1M229 451h1M231 451h1M226 452h1M229 452h1M232 452h1M228 453h3M252 453h1M258 453h1M264 453h1M228 454h1M230 454h1M251 454h2M257 454h2M263 454h1M229 455h1M251 455h1M253 455h1M257 455h1M259 455h1M263 455h1M250 456h1M253 456h1M256 456h1M259 456h1M262 456h1M249 457h1M253 457h1M255 457h1M259 457h1M261 457h1M249 458h1M254 458h2M260 458h2M248 459h1M254 459h1M260 459h1"/>
<path stroke="#ffff00" d="M110 57h1M114 57h1M118 57h1M111 58h1M113 58h1M115 58h1M117 58h1M119 58h1M112 59h1M116 59h1M120 59h1M124 59h1M112 60h1M116 60h1M120 60h1M123 60h2M112 61h1M116 61h1M120 61h1M122 61h1M124 61h1M112 62h1M116 62h1M120 62h2M124 62h1M112 63h1M116 63h1M120 63h1M124 63h1M112 64h1M116 64h1M120 64h1M124 64h1M191 64h1M112 65h1M116 65h1M120 65h1M124 65h1M189 65h5M112 66h1M116 66h1M120 66h1M124 66h1M191 66h1M112 67h1M116 67h1M120 67h1M124 67h1M191 67h1M193 67h2M112 68h1M116 68h1M120 68h1M124 68h1M191 68h2M195 68h1M112 69h1M116 69h1M120 69h1M124 69h1M191 69h1M195 69h1M112 70h1M116 70h1M121 70h1M123 70h1M191 70h1M194 70h1M112 71h1M116 71h1M122 71h1M191 71h1M194 71h1M121 72h1M123 72h1M195 72h1M120 73h1M124 73h1M60 120h3M59 121h1M63 121h1M59 122h1M63 122h1M59 123h1M63 123h1M60 124h3M61 125h1M59 126h5M61 127h1M61 128h1M280 150h1M630 196h3M631 197h2M630 198h1M632 198h1M625 199h1M629 199h1M626 200h1M628 200h1M627 201h1M626 202h1M628 202h1M625 203h1M629 203h1M624 204h1M332 209h1M414 213h3M413 214h1M417 214h1M445 214h1M457 214h1M413 215h1M417 215h1M446 215h1M456 215h1M413 216h1M417 216h1M446 216h1M456 216h1M414 217h3M447 217h2M454 217h2M415 218h1M449 218h5M413 219h5M447 219h2M454 219h2M415 220h1M446 220h1M456 220h1M415 221h1M446 221h1M456 221h1M445 222h1M457 222h1M445 223h1M457 223h1M445 224h1M457 224h1M445 225h1M457 225h1M445 226h1M457 226h1M446 227h1M456 227h1M446 228h1M456 228h1M447 229h2M454 229h2M449 230h5M625 236h2M630 236h2M624 237h1M627 237h1M629 237h1M632 237h1M624 238h1M627 238h1M629 238h1M632 238h1M625 239h1M627 239h1M629 239h1M631 239h1M628 240h1M628 241h1M628 242h1M628 243h1M628 244h1M450 245h3M449 246h1M453 246h1M449 247h1M453 247h1M449 248h1M453 248h1M450 249h3M451 250h1M449 251h5M451 252h1M451 253h1M357 264h5M333 265h1M356 265h1M362 265h1M338 266h1M355 266h1M363 266h1M337 267h3M355 267h1M363 267h1M338 268h1M355 268h1M363 268h1M355 269h1M363 269h1M355 270h1M363 270h1M356 271h1M362 271h1M357 272h5M359 273h1M387 273h5M359 274h1M368 274h1M386 274h1M392 274h1M359 275h1M367 275h3M385 275h1M393 275h1M355 276h9M368 276h1M385 276h1M393 276h1M627 276h3M359 277h1M385 277h1M393 277h1M626 277h1M630 277h1M359 278h1M385 278h1M393 278h1M625 278h1M631 278h1M359 279h1M385 279h1M393 279h1M625 279h1M631 279h1M359 280h1M386 280h1M392 280h1M625 280h1M631 280h1M387 281h5M626 281h1M630 281h1M389 282h1M624 282h1M626 282h1M630 282h1M389 283h1M625 283h1M631 283h1M389 284h1M632 284h1M385 285h9M389 286h1M389 287h1M389 288h1M389 289h1M320 295h1M319 296h1M322 298h1M324 298h1M323 299h1M316 300h1M339 301h1M339 302h1M335 303h9M339 304h1M339 305h1M339 306h1M339 307h1M343 307h3M339 308h1M342 308h1M346 308h1M339 309h3M347 309h1M339 310h1M347 310h1M339 311h1M347 311h1M339 312h1M346 312h1M339 313h1M345 313h1M339 314h1M345 314h1M339 315h1M345 315h1M300 316h1M346 316h1M348 316h1M347 317h3M348 318h1M365 320h1M365 321h1M361 322h9M365 323h1M365 324h1M365 325h1M365 326h1M369 326h3M365 327h1M368 327h1M372 327h1M365 328h3M373 328h1M365 329h1M373 329h1M365 330h1M373 330h1M365 331h1M372 331h1M365 332h1M371 332h1M365 333h1M371 333h1M365 334h1M371 334h1M372 335h1M373 336h1M97 342h3M96 343h1M100 343h1M96 344h1M100 344h1M96 345h1M100 345h1M97 346h3M627 346h3M98 347h1M626 347h1M630 347h1M96 348h5M626 348h1M630 348h1M98 349h1M626 349h1M630 349h1M98 350h1M627 350h3M628 351h1M626 352h5M628 353h1M628 354h1M627 376h1M625 377h5M627 378h1M627 379h1M629 379h2M627 380h2M631 380h1M627 381h1M631 381h1M627 382h1M630 382h1M627 383h1M630 383h1M631 384h1M123 413h1M121 414h5M123 415h1M123 416h1M125 416h2M123 417h2M127 417h1M123 418h1M127 418h1M123 419h1M126 419h1M123 420h1M126 420h1M127 421h1M143 423h1M149 423h1M153 423h3M142 424h2M149 424h2M152 424h1M156 424h1M141 425h1M143 425h1M149 425h1M151 425h1M157 425h1M143 426h1M148 426h1M150 426h1M157 426h1M143 427h1M147 427h1M151 427h1M157 427h1M143 428h1M147 428h1M152 428h1M156 428h1M143 429h1M147 429h1M153 429h3M143 430h1M147 430h1M154 430h1M143 431h1M147 431h1M155 431h1M144 432h1M146 432h1M156 432h1M145 433h1M157 433h1M145 434h1M157 434h1M145 435h1M157 435h1M145 436h1M157 436h1M145 437h1M157 437h1M156 438h1M155 439h1"/>
<path stroke="#0000ff" d="M327 40h5M326 41h1M332 41h1M323 42h3M333 42h3M322 43h1M332 43h1M336 43h1M321 44h1M331 44h1M337 44h1M331 45h1M337 45h1M323 46h3M331 46h1M337 46h1M322 47h1M326 47h1M332 47h1M336 47h1M321 48h1M327 48h1M333 48h3M321 49h1M327 49h1M321 50h1M327 50h1M337 50h1M322 51h1M326 51h1M336 51h1M323 52h3M333 52h3M326 53h1M332 53h1M327 54h5M352 57h3M351 58h1M355 58h2M352 59h1M356 59h1M353 60h1M357 60h1M353 61h1M357 61h1M353 62h1M357 62h1M352 63h1M356 63h1M351 64h1M355 64h2M352 65h3M316 98h5M315 99h1M321 99h2M314 100h1M323 100h1M315 101h1M324 101h1M316 102h1M325 102h1M317 103h1M325 103h1M317 104h1M326 104h1M318 105h1M326 105h1M318 106h1M326 106h1M318 107h1M326 107h1M317 108h1M326 108h1M317 109h1M325 109h1M316 110h1M325 110h1M315 111h1M324 111h1M314 112h1M323 112h1M315 113h1M321 113h2M316 114h5M304 121h1M303 122h3M304 123h1M300 125h5M299 126h1M305 126h2M298 127h1M307 127h1M299 128h1M308 128h1M377 128h1M380 128h1M383 128h1M300 129h1M309 129h1M377 129h1M379 129h1M381 129h1M383 129h1M301 130h1M309 130h1M377 130h1M380 130h1M383 130h1M301 131h1M310 131h1M378 131h1M382 131h1M302 132h1M310 132h1M379 132h3M302 133h1M310 133h1M380 133h1M302 134h1M310 134h1M378 134h5M301 135h1M310 135h1M380 135h1M301 136h1M309 136h1M380 136h1M300 137h1M309 137h1M299 138h1M308 138h1M298 139h1M307 139h1M299 140h1M305 140h2M300 141h5M289 148h1M288 149h3M289 150h1M66 184h1M69 184h1M72 184h1M65 185h2M68 185h3M72 185h2M66 186h1M69 186h1M72 186h1M67 187h1M69 187h1M71 187h1M68 188h3M69 189h1M67 190h5M69 191h1M69 192h1M626 216h1M629 216h1M632 216h1M623 217h1M625 217h2M628 217h2M631 217h1M624 218h2M627 218h2M630 218h2M624 219h1M627 219h1M630 219h1M626 221h1M629 221h1M632 221h1M625 222h2M628 222h2M631 222h1M625 223h1M627 223h2M630 223h2M624 224h1M627 224h1M630 224h1M24 225h1M27 225h1M30 225h1M24 226h1M26 226h1M28 226h1M30 226h1M24 227h1M27 227h1M30 227h1M25 228h1M29 228h1M26 229h3M27 230h1M25 231h5M27 232h1M27 233h1M19 248h1M23 248h1M27 248h1M20 249h1M22 249h1M24 249h1M26 249h1M28 249h1M21 250h1M25 250h1M29 250h1M21 251h1M25 251h1M29 251h1M21 252h1M25 252h1M29 252h1M21 253h1M25 253h1M29 253h1M21 254h1M25 254h1M29 254h1M21 255h1M25 255h1M29 255h1M21 256h1M25 256h1M29 256h1M625 256h1M632 256h1M21 257h1M25 257h1M29 257h1M626 257h6M21 258h1M25 258h1M29 258h1M627 258h1M630 258h1M21 259h1M25 259h1M29 259h1M34 259h1M627 259h1M630 259h1M21 260h1M25 260h1M29 260h1M33 260h3M627 260h1M630 260h1M21 261h1M25 261h1M29 261h1M34 261h1M627 261h1M630 261h1M21 262h1M25 262h1M29 262h1M34 262h1M627 262h1M630 262h1M30 263h1M33 263h1M626 263h6M31 264h2M625 264h1M632 264h1M627 298h3M626 299h1M630 299h1M626 300h1M630 300h1M624 301h4M629 301h4M320 302h1M319 303h3M624 303h9M320 304h1M324 315h1M330 315h1M336 315h1M324 316h1M330 316h1M336 316h1M323 317h3M328 317h5M335 317h3M324 318h1M330 318h1M336 318h1M324 319h1M330 319h1M336 319h1M325 320h1M330 320h1M335 320h1M325 321h1M330 321h1M335 321h1M344 321h1M326 322h2M330 322h1M333 322h2M343 322h3M328 323h5M344 323h1M330 324h1M330 325h1M330 326h1M626 326h3M326 327h9M625 327h1M629 327h2M330 328h1M626 328h1M630 328h1M330 329h1M627 329h1M631 329h1M330 330h1M627 330h1M631 330h1M330 331h1M627 331h1M631 331h1M626 332h1M630 332h1M625 333h1M629 333h2M626 334h3M348 336h1M354 336h1M360 336h1M348 337h1M354 337h1M360 337h1M347 338h3M352 338h5M359 338h3M348 339h1M354 339h1M360 339h1M230 340h1M348 340h1M354 340h1M360 340h1M229 341h3M349 341h1M354 341h1M359 341h1M230 342h1M349 342h1M354 342h1M359 342h1M350 343h2M354 343h1M357 343h2M352 344h5M354 345h1M354 346h1M354 347h1M350 348h9M354 349h1M354 350h1M354 351h1M354 352h1M222 355h1M227 355h3M234 355h1M222 356h1M226 356h1M230 356h1M234 356h1M222 357h1M226 357h1M230 357h1M234 357h1M222 358h1M226 358h1M230 358h1M234 358h1M222 359h1M227 359h3M234 359h1M223 360h1M233 360h1M223 361h1M233 361h1M224 362h2M231 362h2M226 363h5M228 364h1M228 365h1M228 366h1M224 367h9M228 368h1M228 369h1M228 370h1M228 371h1M227 372h1M226 373h3M227 374h1M219 386h1M224 386h3M231 386h1M219 387h1M223 387h1M227 387h1M231 387h1M219 388h1M223 388h1M227 388h1M231 388h1M219 389h1M223 389h1M227 389h1M231 389h1M219 390h1M224 390h3M231 390h1M220 391h1M230 391h1M220 392h1M230 392h1M221 393h2M228 393h2M223 394h5M225 395h1M225 396h1M625 396h1M628 396h1M631 396h1M225 397h1M624 397h2M627 397h3M631 397h2M221 398h9M625 398h1M628 398h1M631 398h1M225 399h1M626 399h1M628 399h1M630 399h1M225 400h1M627 400h3M225 401h1M628 401h1M225 402h1M626 402h5M628 403h1M628 404h1M352 405h1M368 405h1M284 406h3M353 406h1M367 406h1M625 406h1M628 406h1M631 406h1M283 407h1M287 407h2M354 407h1M366 407h1M625 407h1M627 407h1M629 407h1M631 407h1M284 408h1M288 408h1M355 408h1M365 408h1M625 408h1M628 408h1M631 408h1M285 409h1M289 409h1M355 409h1M365 409h1M626 409h1M630 409h1M285 410h1M289 410h1M356 410h1M364 410h1M627 410h3M285 411h1M289 411h1M356 411h1M364 411h1M628 411h1M284 412h1M288 412h1M356 412h1M364 412h1M626 412h5M283 413h1M287 413h2M352 413h17M628 413h1M284 414h3M356 414h1M364 414h1M628 414h1M356 415h1M364 415h1M356 416h1M364 416h1M355 417h1M365 417h1M355 418h1M365 418h1M354 419h1M366 419h1M353 420h1M367 420h1M352 421h1M368 421h1M333 424h1M336 424h1M339 424h1M332 425h2M335 425h3M339 425h2M333 426h1M336 426h1M339 426h1M334 427h1M336 427h1M338 427h1M335 428h3M336 429h1M334 430h5M336 431h1M336 432h1"/>
<path stroke="#00ffff" d="M319 295h1M317 296h2M315 297h3M313 298h3M311 299h3M309 300h3M307 301h3M305 302h3M302 303h4M300 304h3M298 305h3M296 306h3M294 307h3M292 308h3M290 309h3M288 310h3M286 311h2M283 312h3M281 313h3M279 314h3M277 315h3M275 316h3M273 317h2M271 318h2M269 319h2M266 320h3M264 321h3M262 322h3M260 323h3M258 324h2M256 325h2M254 326h2M252 327h2M250 328h2M247 329h3M245 330h3M243 331h2M241 332h2M239 333h2M237 334h2M235 335h2M233 336h2M231 337h2"/>
</g>
<text transform="translate(67.5,288) scale(.85,1)" x="0" fill="#ff0000">1</text>
<text transform="translate(115.5,371) scale(.85,1)" x="0" fill="#ffff00">2</text>
<text transform="translate(208.5,419) scale(.85,1)" x="0" fill="#00ff00">3</text>
<text transform="translate(310.5,406) scale(.85,1)" x="0" fill="#0000ff">4</text>
<text transform="translate(382.5,349) scale(.85,1)" x="0" fill="#ff0000">5</text>
<text transform="translate(413.5,278) scale(.85,1)" x="0" fill="#ffff00">6</text>
<text transform="translate(411.5,200) scale(.85,1)" x="0" fill="#00ff00">7</text>
<text transform="translate(363.5,117) scale(.85,1)" x="0" fill="#0000ff">8</text>
<text transform="translate(270.5,69) scale(.85,1)" x="0" fill="#ff0000">9</text>
<text transform="translate(168.5,82) scale(.85,1)" x="-4.71 4.71" fill="#ffff00">10</text>
<text transform="translate(96.5,139) scale(.85,1)" x="-4.71 4.71" fill="#00ff00">11</text>
<text transform="translate(65.5,210) scale(.85,1)" x="-4.71 4.71" fill="#0000ff">12</text>
</svg>
<pre><span class="w">Astrolog 5.41G</span>
Inner ring:
Chart of the Moment
<span class="w">Wed March 25, 2026</span>
<span class="w">10:16:00pm (DT -8:00 GMT)</span>
San Francisco, CA
122°41'00"W 37°79'00"N
Outer ring - Transit:
<span class="y">Thu March 26, 2026</span>
<span class="y"> 7:16:17am (ST +2:00 GMT)</span>
 26°43'00"E 58°23'00"N
Placidus houses.
Tropical, Geocentric.
<span class="y">Julian Day = 2461125.7196</span>
Obliquity = 23°26'09"
Sidereal time: 19:17:50
DeltaT =  95.4979

<span class="r"> 1st house: </span><span class="b">10Sco16</span>
<span class="y"> 2nd house: </span><span class="r"> 9Sag21</span>
<span class="g"> 3rd house: </span><span class="y">12Cap26</span>
<span class="b"> 4th house: </span><span class="g">17Aqu33</span>
<span class="r"> 5th house: </span><span class="b">20Pis13</span>
<span class="y"> 6th house: </span><span class="r">17Ari41</span>
<span class="g"> 7th house: </span><span class="y">10Tau16</span>
<span class="b"> 8th house: </span><span class="g"> 9Gem21</span>
<span class="r"> 9th house: </span><span class="b">12Can26</span>
<span class="y">10th house: </span><span class="r">17Leo33</span>
<span class="g">11th house: </span><span class="y">20Vir13</span>
<span class="b">12th house: </span><span class="g">17Lib41</span>

<span class="r"> Sun: </span><span class="r"> 5Ari34</span>  + 0°00'
<span class="b">Moon: </span><span class="b">11Can00</span>  + 4°26'
<span class="g">Merc: </span><span class="b"> 9Pis50</span>  - 0°15'
<span class="y">Venu: </span><span class="r">24Ari31</span>  - 0°40'
<span class="r">Mars: </span><span class="b">18Pis35</span>  - 1°04'
<span class="r">Jupi: </span><span class="b">15Can27</span>  + 0°22'
<span class="y">Satu: </span><span class="r"> 4Ari50</span>  - 2°08'
<span class="g">Uran: </span><span class="y">28Tau31</span>  - 0°10'
<span class="b">Nept: </span><span class="r"> 1Ari59</span>  - 1°18'
<span class="b">Plut: </span><span class="g"> 5Aqu07</span>  - 3°56'

Fire: 4, Earth: 1,
Air : 1, Water: 4
Car: 6, Fix: 2, Mut: 2
Yang: 5, Yin: 5
M: 3, N: 7, A: 1, D: 9</pre>
</div></body></html>
